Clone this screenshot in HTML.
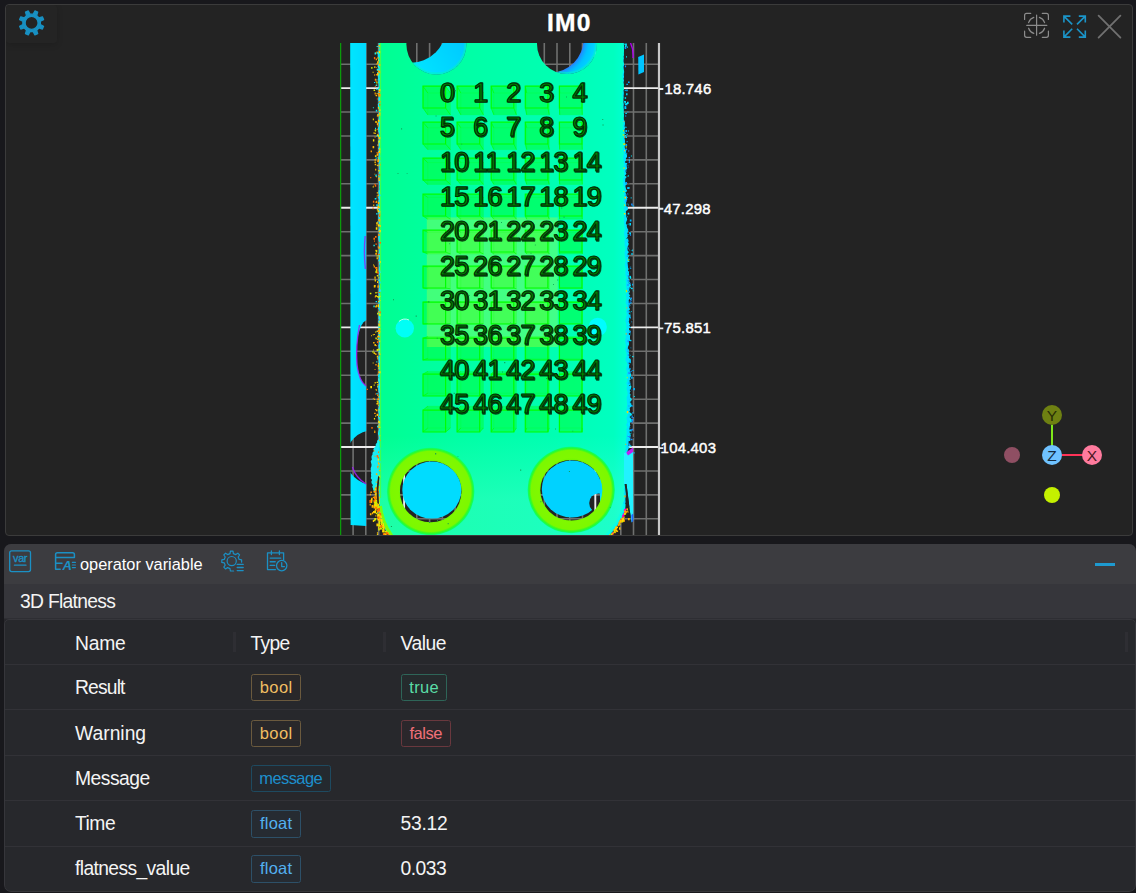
<!DOCTYPE html>
<html lang="en">
<head>
<meta charset="utf-8">
<title>IM0</title>
<style>
*{box-sizing:border-box;margin:0;padding:0}
html,body{width:1136px;height:893px;overflow:hidden;background:#18181c;}
body{position:relative;font-family:"Liberation Sans",sans-serif;color:#f2f2f2;}
.abs{position:absolute}
#top{position:absolute;left:5px;top:4px;width:1128px;height:532px;background:#232323;border:1px solid #3b3b3b;border-radius:4px;overflow:hidden}
#gearbtn{position:absolute;left:0;top:0;width:51px;height:38px;background:#242424;border-radius:3px;box-shadow:0 2px 6px rgba(0,0,0,.14)}
#title{position:absolute;left:469.4px;top:9.4px;width:200px;text-align:center;font-weight:bold;font-size:24.6px;line-height:28px;color:#fff;letter-spacing:1.2px;-webkit-text-stroke:.35px #fff}
#view{position:absolute;left:0;top:0;width:1136px;height:893px;pointer-events:none}
#bot{position:absolute;left:4px;top:544px;width:1132px;height:348px;background:#27272b;border-radius:7px 7px 7px 7px;overflow:hidden}
#tb{position:absolute;left:0;top:0;width:100%;height:40px;background:#3c3c40}
#sec{position:absolute;left:0;top:40px;width:100%;height:35px;background:#36363b;border-bottom:1px solid #2e2e33}
#sec span{position:absolute;left:16px;top:6.2px;font-size:19.3px;line-height:24px;color:#f4f4f4;letter-spacing:-.7px;white-space:nowrap}
#tbl{position:absolute;left:0;top:75px;width:1132px;height:273px;background:#27282c;border:1px solid #36363b;border-radius:5px 5px 7px 7px;overflow:hidden}
.row{position:absolute;left:0;width:100%;height:45.5px;border-bottom:1px solid #323237}
.row span{position:absolute;top:11.4px;font-size:19.3px;line-height:24px;color:#f4f4f4;white-space:nowrap;letter-spacing:-.5px}
.c1{left:70px}.c2{left:245.5px}.c3{left:395.5px}
.tag{position:absolute;top:9.8px;height:27.4px;border:1px solid;border-radius:2.5px;font-size:16.5px;line-height:24.6px;text-align:center;white-space:nowrap}
.tbool{color:#f0be62;border-color:#6b5a3e;background:#29282a;letter-spacing:.45px;text-indent:.45px}
.ttrue{color:#5adca6;border-color:#2e6558;background:#252b2d;letter-spacing:.3px;text-indent:.3px}
.tfalse{color:#f07078;border-color:#6a383e;background:#2b272b;letter-spacing:-.45px;text-indent:-.45px}
.tmsg{color:#1d8fcc;border-color:#1e4a60;background:#24292f;letter-spacing:-.6px;text-indent:-.6px}
.tfloat{color:#53b0f0;border-color:#2d5068;background:#262b32;letter-spacing:.25px;text-indent:.25px}
.grip{position:absolute;top:12px;width:2.6px;height:20px;background:#2e2e33}
.lbl{font-family:"Liberation Sans",sans-serif;font-size:14.9px;fill:#fff;stroke:#fff;stroke-width:.45px;letter-spacing:.25px}
</style>
</head>
<body>
<div id="top">
  <div id="gearbtn"></div>
</div>
<div id="title">IM0</div>
<svg id="view" viewBox="0 0 1136 893" width="1136" height="893">
  <!-- settings gear -->
  <g transform="translate(31.6,22.9)" fill="#1890c2">
    <path fill-rule="evenodd" d="M1.62 -8.75L3.31 -11.95L6.11 -10.79L5.04 -7.33L7.33 -5.04L10.79 -6.11L11.95 -3.31L8.75 -1.62L8.75 1.62L11.95 3.31L10.79 6.11L7.33 5.04L5.04 7.33L6.11 10.79L3.31 11.95L1.62 8.75L-1.62 8.75L-3.31 11.95L-6.11 10.79L-5.04 7.33L-7.33 5.04L-10.79 6.11L-11.95 3.31L-8.75 1.62L-8.75 -1.62L-11.95 -3.31L-10.79 -6.11L-7.33 -5.04L-5.04 -7.33L-6.11 -10.79L-3.31 -11.95L-1.62 -8.75Z M0 -6.5 A6.5 6.5 0 1 0 0 6.5 A6.5 6.5 0 1 0 0 -6.5 Z" stroke="#1890c2" stroke-width="1.3" stroke-linejoin="round"/>
  </g>
  <!-- focus icon -->
  <g fill="none" stroke="#8c8c8c" stroke-width="1.2" stroke-linecap="round">
    <path d="M1024.6 19.5V15.4Q1024.6 13.4 1026.6 13.4H1030.7M1042.3 13.4H1046.4Q1048.4 13.4 1048.4 15.4V19.5M1048.4 31.2V35.3Q1048.4 37.3 1046.4 37.3H1042.3M1030.7 37.3H1026.6Q1024.6 37.3 1024.6 35.3V31.2"/>
    <path d="M1036.6 15V35.2M1026.8 25.4H1046.8"/>
    <path d="M1028.6 22.6A8.4 8.4 0 0 1 1033.8 17.4M1039.4 17.4A8.4 8.4 0 0 1 1044.6 22.6M1044.6 28.2A8.4 8.4 0 0 1 1039.4 33.4M1033.8 33.4A8.4 8.4 0 0 1 1028.6 28.2"/>
  </g>
  <!-- expand icon -->
  <g fill="none" stroke="#1b94c8" stroke-width="1.6" stroke-linecap="butt" stroke-linejoin="miter">
    <path d="M1063.9 22.6V16.1H1070.4M1064.4 16.6L1072.2 24.4"/>
    <path d="M1085.3 22.6V16.1H1078.8M1084.8 16.6L1077 24.4"/>
    <path d="M1063.9 30.6V37.1H1070.4M1064.4 36.6L1072.2 28.8"/>
    <path d="M1085.3 30.6V37.1H1078.8M1084.8 36.6L1077 28.8"/>
  </g>
  <!-- close -->
  <path d="M1098.6 15.6L1120.4 37.6M1120.4 15.6L1098.6 37.6" stroke="#707070" stroke-width="1.8" fill="none" stroke-linecap="round"/>
  <!-- axis gizmo -->
  <g>
    <circle cx="1012" cy="455" r="8" fill="#8f4f63"/>
    <circle cx="1052" cy="495" r="8" fill="#c4f000"/>
    <path d="M1052 425V446" stroke="#7fe81a" stroke-width="2"/>
    <path d="M1062 455H1083" stroke="#ff3358" stroke-width="2"/>
    <circle cx="1052" cy="415" r="10" fill="#6e8012"/>
    <circle cx="1052" cy="455" r="10" fill="#6fc2ff"/>
    <circle cx="1092" cy="455" r="10" fill="#ff7b9e"/>
    <g font-family="Liberation Sans,sans-serif" font-size="15.5" text-anchor="middle">
      <text x="1052" y="420.6" fill="#262c06">Y</text>
      <text x="1052" y="460.6" fill="#152c40">Z</text>
      <text x="1092" y="460.6" fill="#4a1622">X</text>
    </g>
  </g>
<defs>
<clipPath id="cv"><rect x="340" y="43" width="320.6" height="492"/></clipPath>
<linearGradient id="gp" gradientUnits="userSpaceOnUse" x1="380" y1="0" x2="626" y2="0"><stop offset="0" stop-color="#00ff92"/><stop offset=".3" stop-color="#00ffa4"/><stop offset=".7" stop-color="#00ffb2"/><stop offset=".95" stop-color="#00ffc0"/><stop offset="1" stop-color="#00ffd4"/></linearGradient>
<linearGradient id="gs" gradientUnits="userSpaceOnUse" x1="350" y1="0" x2="366" y2="0"><stop offset="0" stop-color="#00e6ff"/><stop offset="1" stop-color="#00daff"/></linearGradient>
<linearGradient id="gn1" gradientUnits="userSpaceOnUse" x1="420" y1="75" x2="468" y2="43"><stop offset="0" stop-color="#00e4ff"/><stop offset="1" stop-color="#00c8ff"/></linearGradient>
<radialGradient id="gn2" gradientUnits="userSpaceOnUse" cx="550.6" cy="39.5" r="48"><stop offset=".685" stop-color="#2a80ff"/><stop offset=".73" stop-color="#10a4ff"/><stop offset=".80" stop-color="#00c4ff"/><stop offset="1" stop-color="#00dcff"/></radialGradient>
<radialGradient id="gr" gradientUnits="objectBoundingBox" cx=".5" cy=".5" r=".5"><stop offset=".68" stop-color="#6cf600"/><stop offset=".74" stop-color="#80f800"/><stop offset=".915" stop-color="#7cf800"/><stop offset=".955" stop-color="#30fc28"/><stop offset=".98" stop-color="#18ff50"/><stop offset="1" stop-color="#08ff88"/></radialGradient>
<mask id="mp" maskUnits="userSpaceOnUse" x="340" y="43" width="321" height="492"><rect x="340" y="43" width="321" height="492" fill="#fff"/><circle cx="436.4" cy="44.6" r="30" fill="#000"/><circle cx="567" cy="44" r="30" fill="#000"/><ellipse cx="430.7" cy="491.6" rx="30.8" ry="30.7" fill="#000"/><ellipse cx="571.3" cy="490.2" rx="31" ry="30.3" fill="#000"/></mask>
<mask id="mn" maskUnits="userSpaceOnUse" x="340" y="43" width="321" height="492"><rect x="340" y="43" width="321" height="492" fill="#fff"/><circle cx="409.4" cy="25.7" r="37.4" fill="#000"/><circle cx="550.6" cy="39.5" r="32.9" fill="#000"/></mask>
<mask id="ms" maskUnits="userSpaceOnUse" x="340" y="43" width="40" height="492"><rect x="340" y="43" width="40" height="492" fill="#fff"/><ellipse cx="367.5" cy="353" rx="11" ry="33" fill="#000"/><circle cx="373.2" cy="457.5" r="27.3" fill="#000"/></mask>
<mask id="md" maskUnits="userSpaceOnUse" x="530" y="450" width="90" height="85"><rect x="530" y="450" width="90" height="85" fill="#fff"/><circle cx="598.6" cy="503" r="9.4" fill="#000"/></mask>
</defs>
<g clip-path="url(#cv)">
<path d="M353.1 43V535M365.8 43V535M378.6 43V535M391.3 43V535M416.8 43V535M429.6 43V535M442.3 43V535M455.1 43V535M480.6 43V535M493.3 43V535M506.1 43V535M518.8 43V535M544.3 43V535M557 43V535M569.8 43V535M582.5 43V535M608 43V535M620.8 43V535M633.5 43V535M646.3 43V535M340 64.2H660M340 112H660M340 136H660M340 159.9H660M340 183.8H660M340 231.7H660M340 255.6H660M340 279.5H660M340 303.5H660M340 351.3H660M340 375.3H660M340 399.2H660M340 423.1H660M340 471H660M340 494.9H660M340 518.8H660" stroke="#6f706f" stroke-width="1.6" fill="none"/>
<path d="M340 88.1H660M340 207.8H660M340 327.4H660M340 447H660M404.1 43V535M467.8 43V535M531.5 43V535M595.3 43V535" stroke="#ececec" stroke-width="1.9" fill="none"/>
<path d="M340.6 43V535" stroke="#0a9a0a" stroke-width="1.3"/>
<path d="M659 43V535" stroke="#c8c8c8" stroke-width="2.2"/>
<g mask="url(#ms)"><path d="M350.2 43H366.2V526L350.6 525Z" fill="url(#gs)"/></g>
<path d="M359.5 325Q355.6 345 357 365Q359 381 366 386" stroke="#a020f0" stroke-width="1.3" fill="none" opacity=".9"/>
<path d="M365.2 236Q363.6 252 365.4 269" stroke="#8a2cf0" stroke-width="1.4" fill="none" opacity=".85"/>
<path d="M352.4 467Q356 478 366 484" stroke="#9a20f0" stroke-width="1.3" fill="none" opacity=".9"/>
<path d="M638.2 57L644 54.6V72L638.4 74.4Z" fill="#00c4ff"/>
<path d="M630.5 43Q633.6 49 633 58" stroke="#b000f0" stroke-width="1.4" fill="none"/>
<path d="M600 43L623.9 43L623.8 44.7L624.1 46.4L623.7 48.1L624 49.8L623.9 51.5L623.7 53.2L624 54.9L623.6 56.6L623.9 58.3L623.6 60L623.6 61.7L623.9 63.4L624.1 65.1L623.6 66.8L623.7 68.5L623.9 70.2L624.2 71.9L623.9 73.6L623.8 75.3L624.1 77L623.5 78.7L624 80.4L623.6 82.1L623.5 83.8L623.5 85.5L623.6 87.2L623.9 88.9L623.5 90.6L623.8 92.3L623.8 94L623.6 95.7L623.7 97.4L623.4 99.1L623.3 100.8L623.5 102.5L623.8 104.2L623.6 105.9L623.6 107.6L623.8 109.3L623.7 111L623.6 112.7L624 114.4L623.9 116.1L623.6 117.8L623.8 119.5L624.7 121.2L625 122.9L624.9 124.6L624.6 126.3L625.1 128L624.5 129.7L624.7 131.4L625 133.1L624.5 134.8L624.8 136.5L624.5 138.2L624.9 139.9L625 141.6L624.9 143.3L625.1 145L624.7 146.7L625 148.4L626.1 150.1L626.1 151.8L625.7 153.5L626.8 155.2L627 156.9L625.8 158.6L626.3 160.3L624.8 162L626.5 163.7L626.4 165.4L627.3 167.1L626.9 168.8L625.5 170.5L625.8 172.2L626.5 173.9L624.9 175.6L626.1 177.3L625.3 179L625.2 180.7L625.1 182.4L627 184.1L625.3 185.8L625.7 187.5L626.1 189.2L627.3 190.9L625.3 192.6L626.3 194.3L626.6 196L627.5 197.7L627.3 199.4L627.5 201.1L626 202.8L626.4 204.5L626.3 206.2L627.7 207.9L627.9 209.6L625.9 211.3L626 213L626.2 214.7L626.2 216.4L626.9 218.1L627.2 219.8L626.4 221.5L625.8 223.2L626.9 224.9L626.8 226.6L627.4 228.3L628.4 230L627.8 231.7L627.3 233.4L627.6 235.1L627.8 236.8L626.3 238.5L628.5 240.2L628.2 241.9L628.5 243.6L628.4 245.3L627.3 247L627.4 248.7L627.6 250.4L629 252.1L627.6 253.8L627.6 255.5L628 257.2L627.9 258.9L628.4 260.6L627.7 262.3L627.6 264L628.1 265.7L628 267.4L628.7 269.1L627.9 270.8L630.1 272.5L629.5 274.2L628.3 275.9L628.6 277.6L628.9 279.3L629 281L628.4 282.7L630.3 284.4L630.7 286.1L629.4 287.8L629.5 289.5L628.5 291.2L628.6 292.9L629.3 294.6L629.1 296.3L630.6 298L628.9 299.7L628.5 301.4L630.9 303.1L629.8 304.8L628.8 306.5L629.8 308.2L628.5 309.9L629.8 311.6L630.9 313.3L630.6 315L630.2 316.7L629 318.4L629.3 320.1L628.7 321.8L630.3 323.5L629.6 325.2L630.2 326.9L629 328.6L628.7 330.3L630.1 332L630.6 333.7L630.2 335.4L630 337.1L630 338.8L629.7 340.5L628.4 342.2L629.1 343.9L628.6 345.6L627.9 347.3L627.9 349L628.7 350.7L628.7 352.4L629.9 354.1L630.6 355.8L629.4 357.5L630.7 359.2L630.9 360.9L630.9 362.6L629.4 364.3L629.1 366L629.2 367.7L629.2 369.4L629.3 371.1L630.4 372.8L631.1 374.5L631 376.2L630.1 377.9L630.6 379.6L631 381.3L629.2 383L630.7 384.7L631.4 386.4L631.1 388.1L631 389.8L630.4 391.5L629.6 393.2L631.2 394.9L630.1 396.6L631.3 398.3L631.8 400L630.3 401.7L630.3 403.4L631.7 405.1L631.1 406.8L629.6 408.5L629.5 410.2L629.5 411.9L631.5 413.6L631.2 415.3L629.5 417L631.2 418.7L631.6 420.4L630.7 422.1L629.9 423.8L630.4 425.5L629.3 427.2L629 428.9L631.4 430.6L630.4 432.3L630 434L630.9 435.7L629.5 437.4L630.5 439.1L630.3 440.8L628.6 442.5L628.6 444.2L628.5 445.9L628.3 447.6L629.1 449.3L627.2 451L627.6 452.7L626.7 454.4L628.7 456.1L627.1 457.8L627.3 459.5L627.6 461.2L628.3 462.9L627.1 464.6L628.3 466.3L627.2 468L627.3 469.7L626.3 471.4L625.9 473.1L626.2 474.8L626 476.5L625.9 478.2L626.4 479.9L625.9 481.6L626.1 483.3L626.3 485L626.1 486.7L625.9 488.4L625.9 490.1L625.9 491.8L626 493.5L625.5 495.2L625.7 496.9L625.4 498.6L625.4 500.3L625.6 502L625.2 503.7L625.1 505.4L625.1 507.1L625 508.8L624.6 510.5L624.1 512.2L623.3 513.9L622.6 515.6L622 517.3L620.9 519L620 520.7L619 522.4L618.3 524.1L616.8 525.8L615.7 527.5L614.5 529.2L612.6 530.9L611.4 532.6L610.3 534.3L608.8 536L600 536Z" fill="#00e2ff"/>
<path d="M400 43L378.7 43L378.7 44.7L378.3 46.4L378.8 48.1L378.6 49.8L378.8 51.5L378 53.2L377.8 54.9L377.7 56.6L378.7 58.3L378 60L378 61.7L378.8 63.4L377.8 65.1L377.6 66.8L378.7 68.5L377.7 70.2L378.5 71.9L378.3 73.6L377.6 75.3L377.9 77L378.8 78.7L378.4 80.4L378.3 82.1L378.6 83.8L378.8 85.5L378.6 87.2L378.1 88.9L379.1 90.6L378.3 92.3L378.5 94L379.1 95.7L378.6 97.4L378.2 99.1L378.4 100.8L379 102.5L377.8 104.2L378 105.9L377.8 107.6L379 109.3L378.8 111L379.1 112.7L378.1 114.4L378.8 116.1L379 117.8L378.6 119.5L377.9 121.2L378.1 122.9L378.8 124.6L379 126.3L377.9 128L378.4 129.7L378.2 131.4L379.1 133.1L379.2 134.8L378.3 136.5L378.7 138.2L379.1 139.9L377.9 141.6L378.4 143.3L378.1 145L379.1 146.7L378.1 148.4L379.2 150.1L378.1 151.8L378.6 153.5L378.8 155.2L378.5 156.9L378 158.6L378.9 160.3L379.1 162L378.6 163.7L379 165.4L379.2 167.1L379.1 168.8L379.3 170.5L379 172.2L378.9 173.9L378.9 175.6L378.3 177.3L378.9 179L378.7 180.7L379.1 182.4L378.9 184.1L379.3 185.8L379 187.5L379.4 189.2L378.4 190.9L378.6 192.6L379.1 194.3L378.7 196L378.1 197.7L379.2 199.4L378.3 201.1L378.8 202.8L378.7 204.5L378.2 206.2L378.9 207.9L378.7 209.6L378.5 211.3L378.1 213L378.9 214.7L378.3 216.4L378.4 218.1L378.5 219.8L378.9 221.5L379 223.2L379.4 224.9L379.3 226.6L379.4 228.3L378.4 230L379.1 231.7L379.2 233.4L379.4 235.1L378.3 236.8L378.3 238.5L378.5 240.2L379.1 241.9L379.1 243.6L379.1 245.3L378.9 247L379.3 248.7L378.9 250.4L379.1 252.1L378.2 253.8L378.1 255.5L378.7 257.2L379.2 258.9L378.2 260.6L379.1 262.3L379 264L379.5 265.7L379 267.4L378.9 269.1L378.8 270.8L379.3 272.5L378.8 274.2L379.5 275.9L379.2 277.6L379.4 279.3L379 281L379.5 282.7L379.5 284.4L379.1 286.1L379.2 287.8L378.8 289.5L378.8 291.2L378.5 292.9L378.7 294.6L378.6 296.3L378.4 298L379.1 299.7L379.1 301.4L378.2 303.1L379.4 304.8L378.6 306.5L378.7 308.2L379.5 309.9L378.4 311.6L378.3 313.3L378.7 315L378.5 316.7L378.4 318.4L379.3 320.1L378.8 321.8L378.8 323.5L378.4 325.2L378.4 326.9L378.4 328.6L378.7 330.3L378.3 332L378.5 333.7L378.5 335.4L379.2 337.1L379.4 338.8L379.3 340.5L379 342.2L379.3 343.9L378.3 345.6L378.7 347.3L378.6 349L378.6 350.7L378.5 352.4L378.8 354.1L379.4 355.8L378.3 357.5L378.4 359.2L378.7 360.9L378.7 362.6L378.5 364.3L379.3 366L378.4 367.7L379 369.4L379.3 371.1L379 372.8L378.4 374.5L379.1 376.2L378.3 377.9L378 379.6L378.7 381.3L378.8 383L378.7 384.7L378.4 386.4L378.3 388.1L378.5 389.8L378.4 391.5L379.2 393.2L379.1 394.9L379 396.6L378.3 398.3L378.9 400L378.5 401.7L379.3 403.4L379.2 405.1L378.9 406.8L378.3 408.5L378.3 410.2L378.3 411.9L378.9 413.6L378.5 415.3L378.6 417L378.6 418.7L379.1 420.4L378 422.1L379 423.8L377.9 425.5L377.9 427.2L379.2 428.9L378.6 430.6L378.1 432.3L377.9 434L378.6 435.7L378.8 437.4L378.9 439.1L377.1 440.8L377.1 442.5L375.7 444.2L375.7 445.9L374.5 447.6L373.3 449.3L374 451L372.5 452.7L372.5 454.4L371.6 456.1L371.5 457.8L371.9 459.5L370.7 461.2L371.1 462.9L371.5 464.6L371.4 466.3L370.7 468L370.7 469.7L370.9 471.4L371.2 473.1L371 474.8L371.2 476.5L370.7 478.2L372.1 479.9L371.4 481.6L371.6 483.3L372.9 485L372.2 486.7L373 488.4L373.2 490.1L374.6 491.8L375.1 493.5L375.8 495.2L375.7 496.9L377.2 498.6L378.7 500.3L378.8 502L379.1 503.7L379.6 505.4L379.6 507.1L378.8 508.8L379.7 510.5L378.9 512.2L380.3 513.9L380.7 515.6L380.8 517.3L381.7 519L382 520.7L381.9 522.4L382.7 524.1L383.5 525.8L384.5 527.5L385.1 529.2L386.1 530.9L387.7 532.6L388.5 534.3L390.5 536L400 536Z" fill="#18ecf4"/>
<g mask="url(#mp)">
<path d="M379.5 43L379.3 45.3L379.5 47.6L379.5 49.9L379.1 52.2L378.9 54.5L379.7 56.8L379 59.1L379.3 61.4L379.2 63.7L379.2 66L379.6 68.3L379.8 70.6L379.2 72.9L379.6 75.2L379.3 77.5L379.5 79.8L379.4 82.1L379.2 84.4L379.2 86.7L379.2 89L379.9 91.3L379.5 93.6L379.3 95.9L379.9 98.2L380 100.5L379.5 102.8L379.2 105.1L379.3 107.4L379.2 109.7L379.4 112L379.2 114.3L379.4 116.6L379.4 118.9L379.7 121.2L380 123.5L379.8 125.8L379.5 128.1L379.5 130.4L379.7 132.7L379.5 135L379.5 137.3L379.3 139.6L379.5 141.9L380.1 144.2L379.3 146.5L379.7 148.8L379.8 151.1L380 153.4L379.4 155.7L379.5 158L379.5 160.3L379.6 162.6L379.7 164.9L380.1 167.2L380 169.5L380.1 171.8L379.3 174.1L379.3 176.4L379.9 178.7L380.1 181L379.7 183.3L379.8 185.6L379.3 187.9L379.7 190.2L380.2 192.5L380.1 194.8L380.1 197.1L380.2 199.4L379.6 201.7L379.5 204L379.5 206.3L379.8 208.6L380 210.9L380.2 213.2L380 215.5L380 217.8L380.1 220.1L379.8 222.4L379.9 224.7L379.4 227L380.1 229.3L379.6 231.6L380.2 233.9L380 236.2L379.7 238.5L379.5 240.8L379.7 243.1L380 245.4L380.1 247.7L379.6 250L379.5 252.3L379.9 254.6L380 256.9L379.8 259.2L379.7 261.5L380 263.8L379.5 266.1L379.8 268.4L379.9 270.7L380.4 273L380.1 275.3L380.3 277.6L379.9 279.9L379.7 282.2L379.7 284.5L380.4 286.8L380.2 289.1L379.8 291.4L379.6 293.7L380 296L380.2 298.3L379.9 300.6L379.8 302.9L380.1 305.2L380.4 307.5L379.7 309.8L379.5 312.1L379.8 314.4L379.9 316.7L380.1 319L379.7 321.3L380.2 323.6L380.1 325.9L379.9 328.2L379.6 330.5L380.3 332.8L379.7 335.1L380.2 337.4L379.6 339.7L379.6 342L380.1 344.3L379.7 346.6L380.3 348.9L379.8 351.2L379.6 353.5L379.6 355.8L379.8 358.1L380 360.4L380.2 362.7L379.5 365L379.7 367.3L379.5 369.6L380.2 371.9L379.5 374.2L379.4 376.5L379.4 378.8L379.7 381.1L380.1 383.4L380.1 385.7L380 388L380.2 390.3L380.1 392.6L379.6 394.9L379.4 397.2L380.1 399.5L379.9 401.8L379.3 404.1L379.8 406.4L379.6 408.7L379.6 411L379.5 413.3L379.4 415.6L379.2 417.9L379.5 420.2L379.5 422.5L380.1 424.8L379.3 427.1L380 429.4L379.4 431.7L379.5 434L379.9 436.3L379.9 438.6L379.5 440.9L379.2 443.2L379.5 445.5L379.4 447.8L379.8 450.1L379.2 452.4L379.3 454.7L379.7 457L378.9 459.3L379.2 461.6L379.6 463.9L379.5 466.2L378.8 468.5L378.8 470.8L378.8 473.1L379.7 475.4L379.1 477.7L379.6 480L379.7 482.3L379.2 484.6L379.2 486.9L379.9 489.2L379.6 491.5L379.3 493.8L379.7 496.1L379.4 498.4L379.5 500.7L379.4 503L380.3 505.3L380.6 507.6L380.5 509.9L381 512.2L380.8 514.5L381.6 516.8L382.4 519.1L383.6 521.4L384.6 523.7L385 526L386 528.3L387.6 530.6L389.1 532.9L390.9 535.2L607.1 535.2L610.2 532.9L612.2 530.6L613.3 528.3L615.8 526L616.2 523.7L618.5 521.4L619.7 519.1L621.3 516.8L622.1 514.5L621.9 512.2L623.8 509.9L623.1 507.6L623.5 505.3L623 503L624 500.7L624.5 498.4L624.5 496.1L623.6 493.8L624.5 491.5L623.7 489.2L624.5 486.9L624.5 484.6L624 482.3L624.5 480L624.1 477.7L624 475.4L624.7 473.1L624.2 470.8L624.7 468.5L625.2 466.2L625.2 463.9L624.4 461.6L624.9 459.3L625.2 457L624.4 454.7L625.2 452.4L625.3 450.1L625.8 447.8L625.6 445.5L626 443.2L625.9 440.9L625.9 438.6L626.6 436.3L626.6 434L626.8 431.7L626.2 429.4L627.4 427.1L626.1 424.8L627.3 422.5L627 420.2L626.2 417.9L627.6 415.6L627.4 413.3L626.6 411L626.5 408.7L626.9 406.4L627.2 404.1L627 401.8L626.7 399.5L626.6 397.2L627.6 394.9L627.6 392.6L626.9 390.3L626.5 388L627.4 385.7L626.3 383.4L627.3 381.1L627 378.8L627.4 376.5L626.5 374.2L627.3 371.9L625.9 369.6L626.5 367.3L627.2 365L627 362.7L625.6 360.4L625.6 358.1L626.8 355.8L626.4 353.5L625.8 351.2L625.1 348.9L626.3 346.6L625.7 344.3L625.3 342L625.2 339.7L625.8 337.4L625.7 335.1L626.1 332.8L625.3 330.5L626.7 328.2L626.3 325.9L626.2 323.6L625.4 321.3L625.7 319L626.2 316.7L626.9 314.4L626.1 312.1L626.8 309.8L626.2 307.5L627 305.2L625.6 302.9L625.9 300.6L626.7 298.3L625.8 296L626 293.7L627 291.4L626.7 289.1L625.9 286.8L625.8 284.5L626.1 282.2L625.6 279.9L626.6 277.6L625.5 275.3L625.4 273L625.6 270.7L626 268.4L625 266.1L624.9 263.8L625.7 261.5L625.5 259.2L625.2 256.9L624.7 254.6L624.6 252.3L625.3 250L625.6 247.7L624.6 245.4L624.7 243.1L624.5 240.8L625.2 238.5L624.6 236.2L624 233.9L624.3 231.6L624.9 229.3L624.8 227L624.2 224.7L624.1 222.4L623.9 220.1L624.2 217.8L623.9 215.5L624.5 213.2L624.4 210.9L623.6 208.6L624.9 206.3L624.5 204L623.7 201.7L623.9 199.4L624.5 197.1L623.7 194.8L624.6 192.5L624 190.2L624.6 187.9L623.3 185.6L623.1 183.3L623.4 181L622.9 178.7L624.3 176.4L624.2 174.1L624.1 171.8L623.5 169.5L622.9 167.2L624.3 164.9L623.7 162.6L623.9 160.3L623 158L623.4 155.7L624.1 153.4L623.2 151.1L623 148.8L623.4 146.5L623.9 144.2L622.7 141.9L622.9 139.6L622.8 137.3L622.8 135L623.6 132.7L623 130.4L623.3 128.1L622.8 125.8L623.7 123.5L622.5 121.2L623.4 118.9L623.7 116.6L623.5 114.3L623.4 112L623.3 109.7L622.9 107.4L622.6 105.1L622.9 102.8L623.3 100.5L623 98.2L622.4 95.9L622.4 93.6L622.7 91.3L623.9 89L623.7 86.7L623.9 84.4L622.8 82.1L623.2 79.8L622.4 77.5L622.5 75.2L622.8 72.9L623.6 70.6L622.7 68.3L622.6 66L623.7 63.7L623 61.4L623 59.1L623 56.8L623.5 54.5L623.8 52.2L623.9 49.9L623.7 47.6L623.9 45.3L622.9 43Z" fill="url(#gp)"/>
<clipPath id="cpl"><path d="M379.5 43L379.3 45.3L379.5 47.6L379.5 49.9L379.1 52.2L378.9 54.5L379.7 56.8L379 59.1L379.3 61.4L379.2 63.7L379.2 66L379.6 68.3L379.8 70.6L379.2 72.9L379.6 75.2L379.3 77.5L379.5 79.8L379.4 82.1L379.2 84.4L379.2 86.7L379.2 89L379.9 91.3L379.5 93.6L379.3 95.9L379.9 98.2L380 100.5L379.5 102.8L379.2 105.1L379.3 107.4L379.2 109.7L379.4 112L379.2 114.3L379.4 116.6L379.4 118.9L379.7 121.2L380 123.5L379.8 125.8L379.5 128.1L379.5 130.4L379.7 132.7L379.5 135L379.5 137.3L379.3 139.6L379.5 141.9L380.1 144.2L379.3 146.5L379.7 148.8L379.8 151.1L380 153.4L379.4 155.7L379.5 158L379.5 160.3L379.6 162.6L379.7 164.9L380.1 167.2L380 169.5L380.1 171.8L379.3 174.1L379.3 176.4L379.9 178.7L380.1 181L379.7 183.3L379.8 185.6L379.3 187.9L379.7 190.2L380.2 192.5L380.1 194.8L380.1 197.1L380.2 199.4L379.6 201.7L379.5 204L379.5 206.3L379.8 208.6L380 210.9L380.2 213.2L380 215.5L380 217.8L380.1 220.1L379.8 222.4L379.9 224.7L379.4 227L380.1 229.3L379.6 231.6L380.2 233.9L380 236.2L379.7 238.5L379.5 240.8L379.7 243.1L380 245.4L380.1 247.7L379.6 250L379.5 252.3L379.9 254.6L380 256.9L379.8 259.2L379.7 261.5L380 263.8L379.5 266.1L379.8 268.4L379.9 270.7L380.4 273L380.1 275.3L380.3 277.6L379.9 279.9L379.7 282.2L379.7 284.5L380.4 286.8L380.2 289.1L379.8 291.4L379.6 293.7L380 296L380.2 298.3L379.9 300.6L379.8 302.9L380.1 305.2L380.4 307.5L379.7 309.8L379.5 312.1L379.8 314.4L379.9 316.7L380.1 319L379.7 321.3L380.2 323.6L380.1 325.9L379.9 328.2L379.6 330.5L380.3 332.8L379.7 335.1L380.2 337.4L379.6 339.7L379.6 342L380.1 344.3L379.7 346.6L380.3 348.9L379.8 351.2L379.6 353.5L379.6 355.8L379.8 358.1L380 360.4L380.2 362.7L379.5 365L379.7 367.3L379.5 369.6L380.2 371.9L379.5 374.2L379.4 376.5L379.4 378.8L379.7 381.1L380.1 383.4L380.1 385.7L380 388L380.2 390.3L380.1 392.6L379.6 394.9L379.4 397.2L380.1 399.5L379.9 401.8L379.3 404.1L379.8 406.4L379.6 408.7L379.6 411L379.5 413.3L379.4 415.6L379.2 417.9L379.5 420.2L379.5 422.5L380.1 424.8L379.3 427.1L380 429.4L379.4 431.7L379.5 434L379.9 436.3L379.9 438.6L379.5 440.9L379.2 443.2L379.5 445.5L379.4 447.8L379.8 450.1L379.2 452.4L379.3 454.7L379.7 457L378.9 459.3L379.2 461.6L379.6 463.9L379.5 466.2L378.8 468.5L378.8 470.8L378.8 473.1L379.7 475.4L379.1 477.7L379.6 480L379.7 482.3L379.2 484.6L379.2 486.9L379.9 489.2L379.6 491.5L379.3 493.8L379.7 496.1L379.4 498.4L379.5 500.7L379.4 503L380.3 505.3L380.6 507.6L380.5 509.9L381 512.2L380.8 514.5L381.6 516.8L382.4 519.1L383.6 521.4L384.6 523.7L385 526L386 528.3L387.6 530.6L389.1 532.9L390.9 535.2L607.1 535.2L610.2 532.9L612.2 530.6L613.3 528.3L615.8 526L616.2 523.7L618.5 521.4L619.7 519.1L621.3 516.8L622.1 514.5L621.9 512.2L623.8 509.9L623.1 507.6L623.5 505.3L623 503L624 500.7L624.5 498.4L624.5 496.1L623.6 493.8L624.5 491.5L623.7 489.2L624.5 486.9L624.5 484.6L624 482.3L624.5 480L624.1 477.7L624 475.4L624.7 473.1L624.2 470.8L624.7 468.5L625.2 466.2L625.2 463.9L624.4 461.6L624.9 459.3L625.2 457L624.4 454.7L625.2 452.4L625.3 450.1L625.8 447.8L625.6 445.5L626 443.2L625.9 440.9L625.9 438.6L626.6 436.3L626.6 434L626.8 431.7L626.2 429.4L627.4 427.1L626.1 424.8L627.3 422.5L627 420.2L626.2 417.9L627.6 415.6L627.4 413.3L626.6 411L626.5 408.7L626.9 406.4L627.2 404.1L627 401.8L626.7 399.5L626.6 397.2L627.6 394.9L627.6 392.6L626.9 390.3L626.5 388L627.4 385.7L626.3 383.4L627.3 381.1L627 378.8L627.4 376.5L626.5 374.2L627.3 371.9L625.9 369.6L626.5 367.3L627.2 365L627 362.7L625.6 360.4L625.6 358.1L626.8 355.8L626.4 353.5L625.8 351.2L625.1 348.9L626.3 346.6L625.7 344.3L625.3 342L625.2 339.7L625.8 337.4L625.7 335.1L626.1 332.8L625.3 330.5L626.7 328.2L626.3 325.9L626.2 323.6L625.4 321.3L625.7 319L626.2 316.7L626.9 314.4L626.1 312.1L626.8 309.8L626.2 307.5L627 305.2L625.6 302.9L625.9 300.6L626.7 298.3L625.8 296L626 293.7L627 291.4L626.7 289.1L625.9 286.8L625.8 284.5L626.1 282.2L625.6 279.9L626.6 277.6L625.5 275.3L625.4 273L625.6 270.7L626 268.4L625 266.1L624.9 263.8L625.7 261.5L625.5 259.2L625.2 256.9L624.7 254.6L624.6 252.3L625.3 250L625.6 247.7L624.6 245.4L624.7 243.1L624.5 240.8L625.2 238.5L624.6 236.2L624 233.9L624.3 231.6L624.9 229.3L624.8 227L624.2 224.7L624.1 222.4L623.9 220.1L624.2 217.8L623.9 215.5L624.5 213.2L624.4 210.9L623.6 208.6L624.9 206.3L624.5 204L623.7 201.7L623.9 199.4L624.5 197.1L623.7 194.8L624.6 192.5L624 190.2L624.6 187.9L623.3 185.6L623.1 183.3L623.4 181L622.9 178.7L624.3 176.4L624.2 174.1L624.1 171.8L623.5 169.5L622.9 167.2L624.3 164.9L623.7 162.6L623.9 160.3L623 158L623.4 155.7L624.1 153.4L623.2 151.1L623 148.8L623.4 146.5L623.9 144.2L622.7 141.9L622.9 139.6L622.8 137.3L622.8 135L623.6 132.7L623 130.4L623.3 128.1L622.8 125.8L623.7 123.5L622.5 121.2L623.4 118.9L623.7 116.6L623.5 114.3L623.4 112L623.3 109.7L622.9 107.4L622.6 105.1L622.9 102.8L623.3 100.5L623 98.2L622.4 95.9L622.4 93.6L622.7 91.3L623.9 89L623.7 86.7L623.9 84.4L622.8 82.1L623.2 79.8L622.4 77.5L622.5 75.2L622.8 72.9L623.6 70.6L622.7 68.3L622.6 66L623.7 63.7L623 61.4L623 59.1L623 56.8L623.5 54.5L623.8 52.2L623.9 49.9L623.7 47.6L623.9 45.3L622.9 43Z"/></clipPath>
<linearGradient id="gb" gradientUnits="userSpaceOnUse" x1="0" y1="436" x2="0" y2="500"><stop offset="0" stop-color="#90fff0" stop-opacity="0"/><stop offset="1" stop-color="#90fff0" stop-opacity=".2"/></linearGradient>
<rect x="376" y="436" width="256" height="100" fill="url(#gb)" clip-path="url(#cpl)"/>
<path d="M380.2 506L381.4 513Q383.4 522 387.4 529L392.4 537" stroke="#80ff00" stroke-width="3.4" fill="none" opacity=".9"/>
<path d="M624 504L623 511L620 518L616.5 524L612 530L607 536" stroke="#00fff0" stroke-width="4" fill="none" opacity=".6"/>
<path d="M380.6 43V498" stroke="#58ff30" stroke-width="1" opacity=".8"/>
<circle cx="430.7" cy="491.4" r="43.8" fill="url(#gr)"/>
<ellipse cx="571.2" cy="489.9" rx="43.7" ry="43.3" fill="url(#gr)"/>
</g>
<g mask="url(#mn)"><circle cx="436.4" cy="44.6" r="30" fill="url(#gn1)"/><circle cx="567" cy="44" r="30" fill="url(#gn2)"/><circle cx="436.4" cy="44.6" r="29.2" fill="none" stroke="#00ffb0" stroke-opacity=".45" stroke-width="2.4"/><circle cx="567" cy="44" r="29.2" fill="none" stroke="#00ffb8" stroke-opacity=".45" stroke-width="2.4"/></g>
<ellipse cx="431.8" cy="490.1" rx="29.5" ry="28.5" fill="#00dcff"/>
<g mask="url(#md)"><ellipse cx="571.8" cy="489" rx="30" ry="28.5" fill="#00d2ff"/></g>
<circle cx="404.8" cy="328.3" r="9.2" fill="#00fff6"/><circle cx="597.7" cy="327" r="9.2" fill="#00fdff"/>
<path d="M399 321.4A9.4 9.4 0 0 1 409 320" stroke="#e8fff0" stroke-width="1" fill="none" opacity=".8"/>
<path d="M423 86.2L445.6 86.2L450.4 93L450.4 114.8L427.8 114.8L423 108ZM457.1 86.2L479.7 86.2L483.4 93L483.4 114.8L460.8 114.8L457.1 108ZM491.2 86.2L513.8 86.2L516.4 93L516.4 114.8L493.8 114.8L491.2 108ZM525.3 86.2L547.9 86.2L549.3 93L549.3 114.8L526.7 114.8L525.3 108ZM559.4 86.2L582 86.2L582.3 93L582.3 114.8L559.7 114.8L559.4 108ZM423 122.2L445.6 122.2L450.4 127.8L450.4 149.6L427.8 149.6L423 144ZM457.1 122.2L479.7 122.2L483.4 127.8L483.4 149.6L460.8 149.6L457.1 144ZM491.2 122.2L513.8 122.2L516.4 127.8L516.4 149.6L493.8 149.6L491.2 144ZM525.3 122.2L547.9 122.2L549.3 127.8L549.3 149.6L526.7 149.6L525.3 144ZM559.4 122.2L582 122.2L582.3 127.8L582.3 149.6L559.7 149.6L559.4 144ZM423 158.2L445.6 158.2L450.4 162.6L450.4 184.4L427.8 184.4L423 180ZM457.1 158.2L479.7 158.2L483.4 162.6L483.4 184.4L460.8 184.4L457.1 180ZM491.2 158.2L513.8 158.2L516.4 162.6L516.4 184.4L493.8 184.4L491.2 180ZM525.3 158.2L547.9 158.2L549.3 162.6L549.3 184.4L526.7 184.4L525.3 180ZM559.4 158.2L582 158.2L582.3 162.6L582.3 184.4L559.7 184.4L559.4 180ZM423 194.2L445.6 194.2L450.4 197.4L450.4 219.2L427.8 219.2L423 216ZM457.1 194.2L479.7 194.2L483.4 197.4L483.4 219.2L460.8 219.2L457.1 216ZM491.2 194.2L513.8 194.2L516.4 197.4L516.4 219.2L493.8 219.2L491.2 216ZM525.3 194.2L547.9 194.2L549.3 197.4L549.3 219.2L526.7 219.2L525.3 216ZM559.4 194.2L582 194.2L582.3 197.4L582.3 219.2L559.7 219.2L559.4 216ZM423 230.2L445.6 230.2L450.4 232.2L450.4 254L427.8 254L423 252ZM457.1 230.2L479.7 230.2L483.4 232.2L483.4 254L460.8 254L457.1 252ZM491.2 230.2L513.8 230.2L516.4 232.2L516.4 254L493.8 254L491.2 252ZM525.3 230.2L547.9 230.2L549.3 232.2L549.3 254L526.7 254L525.3 252ZM559.4 230.2L582 230.2L582.3 232.2L582.3 254L559.7 254L559.4 252ZM423 266.2L445.6 266.2L450.4 267L450.4 288.8L427.8 288.8L423 288ZM457.1 266.2L479.7 266.2L483.4 267L483.4 288.8L460.8 288.8L457.1 288ZM491.2 266.2L513.8 266.2L516.4 267L516.4 288.8L493.8 288.8L491.2 288ZM525.3 266.2L547.9 266.2L549.3 267L549.3 288.8L526.7 288.8L525.3 288ZM559.4 266.2L582 266.2L582.3 267L582.3 288.8L559.7 288.8L559.4 288ZM423 302.2L427.8 301.8L450.4 301.8L450.4 323.6L445.6 324L423 324ZM457.1 302.2L460.8 301.8L483.4 301.8L483.4 323.6L479.7 324L457.1 324ZM491.2 302.2L493.8 301.8L516.4 301.8L516.4 323.6L513.8 324L491.2 324ZM525.3 302.2L526.7 301.8L549.3 301.8L549.3 323.6L547.9 324L525.3 324ZM559.4 302.2L559.7 301.8L582.3 301.8L582.3 323.6L582 324L559.4 324ZM423 338.2L427.8 336.6L450.4 336.6L450.4 358.4L445.6 360L423 360ZM457.1 338.2L460.8 336.6L483.4 336.6L483.4 358.4L479.7 360L457.1 360ZM491.2 338.2L493.8 336.6L516.4 336.6L516.4 358.4L513.8 360L491.2 360ZM525.3 338.2L526.7 336.6L549.3 336.6L549.3 358.4L547.9 360L525.3 360ZM559.4 338.2L559.7 336.6L582.3 336.6L582.3 358.4L582 360L559.4 360ZM423 374.2L427.8 371.4L450.4 371.4L450.4 393.2L445.6 396L423 396ZM457.1 374.2L460.8 371.4L483.4 371.4L483.4 393.2L479.7 396L457.1 396ZM491.2 374.2L493.8 371.4L516.4 371.4L516.4 393.2L513.8 396L491.2 396ZM525.3 374.2L526.7 371.4L549.3 371.4L549.3 393.2L547.9 396L525.3 396ZM559.4 374.2L559.7 371.4L582.3 371.4L582.3 393.2L582 396L559.4 396ZM423 410.2L427.8 406.2L450.4 406.2L450.4 428L445.6 432L423 432ZM457.1 410.2L460.8 406.2L483.4 406.2L483.4 428L479.7 432L457.1 432ZM491.2 410.2L493.8 406.2L516.4 406.2L516.4 428L513.8 432L491.2 432ZM525.3 410.2L526.7 406.2L549.3 406.2L549.3 428L547.9 432L525.3 432ZM559.4 410.2L559.7 406.2L582.3 406.2L582.3 428L582 432L559.4 432Z" fill="#00ff30" fill-opacity=".5"/>
<rect x="426.8" y="217.4" width="131" height="129.6" fill="#dcff28" fill-opacity=".3"/>
<path d="M427.8 93H450.4V114.8H427.8ZM460.8 93H483.4V114.8H460.8ZM493.8 93H516.4V114.8H493.8ZM526.7 93H549.3V114.8H526.7ZM559.7 93H582.3V114.8H559.7ZM427.8 127.8H450.4V149.6H427.8ZM460.8 127.8H483.4V149.6H460.8ZM493.8 127.8H516.4V149.6H493.8ZM526.7 127.8H549.3V149.6H526.7ZM559.7 127.8H582.3V149.6H559.7ZM427.8 162.6H450.4V184.4H427.8ZM460.8 162.6H483.4V184.4H460.8ZM493.8 162.6H516.4V184.4H493.8ZM526.7 162.6H549.3V184.4H526.7ZM559.7 162.6H582.3V184.4H559.7ZM427.8 197.4H450.4V219.2H427.8ZM460.8 197.4H483.4V219.2H460.8ZM493.8 197.4H516.4V219.2H493.8ZM526.7 197.4H549.3V219.2H526.7ZM559.7 197.4H582.3V219.2H559.7ZM427.8 232.2H450.4V254H427.8ZM460.8 232.2H483.4V254H460.8ZM493.8 232.2H516.4V254H493.8ZM526.7 232.2H549.3V254H526.7ZM559.7 232.2H582.3V254H559.7ZM427.8 267H450.4V288.8H427.8ZM460.8 267H483.4V288.8H460.8ZM493.8 267H516.4V288.8H493.8ZM526.7 267H549.3V288.8H526.7ZM559.7 267H582.3V288.8H559.7ZM427.8 301.8H450.4V323.6H427.8ZM460.8 301.8H483.4V323.6H460.8ZM493.8 301.8H516.4V323.6H493.8ZM526.7 301.8H549.3V323.6H526.7ZM559.7 301.8H582.3V323.6H559.7ZM427.8 336.6H450.4V358.4H427.8ZM460.8 336.6H483.4V358.4H460.8ZM493.8 336.6H516.4V358.4H493.8ZM526.7 336.6H549.3V358.4H526.7ZM559.7 336.6H582.3V358.4H559.7ZM427.8 371.4H450.4V393.2H427.8ZM460.8 371.4H483.4V393.2H460.8ZM493.8 371.4H516.4V393.2H493.8ZM526.7 371.4H549.3V393.2H526.7ZM559.7 371.4H582.3V393.2H559.7ZM427.8 406.2H450.4V428H427.8ZM460.8 406.2H483.4V428H460.8ZM493.8 406.2H516.4V428H493.8ZM526.7 406.2H549.3V428H526.7ZM559.7 406.2H582.3V428H559.7Z" stroke="#00ff00" stroke-width=".8" fill="none" stroke-opacity=".22"/>
<path d="M423 86.2l4.8 6.8M445.6 86.2l4.8 6.8M423 108l4.8 6.8M445.6 108l4.8 6.8M457.1 86.2l3.7 6.8M479.7 86.2l3.7 6.8M457.1 108l3.7 6.8M479.7 108l3.7 6.8M491.2 86.2l2.6 6.8M513.8 86.2l2.6 6.8M491.2 108l2.6 6.8M513.8 108l2.6 6.8M525.3 86.2l1.4 6.8M547.9 86.2l1.4 6.8M525.3 108l1.4 6.8M547.9 108l1.4 6.8M559.4 86.2l0.3 6.8M582 86.2l0.3 6.8M559.4 108l0.3 6.8M582 108l0.3 6.8M423 122.2l4.8 5.6M445.6 122.2l4.8 5.6M423 144l4.8 5.6M445.6 144l4.8 5.6M457.1 122.2l3.7 5.6M479.7 122.2l3.7 5.6M457.1 144l3.7 5.6M479.7 144l3.7 5.6M491.2 122.2l2.6 5.6M513.8 122.2l2.6 5.6M491.2 144l2.6 5.6M513.8 144l2.6 5.6M525.3 122.2l1.4 5.6M547.9 122.2l1.4 5.6M525.3 144l1.4 5.6M547.9 144l1.4 5.6M559.4 122.2l0.3 5.6M582 122.2l0.3 5.6M559.4 144l0.3 5.6M582 144l0.3 5.6M423 158.2l4.8 4.4M445.6 158.2l4.8 4.4M423 180l4.8 4.4M445.6 180l4.8 4.4M457.1 158.2l3.7 4.4M479.7 158.2l3.7 4.4M457.1 180l3.7 4.4M479.7 180l3.7 4.4M491.2 158.2l2.6 4.4M513.8 158.2l2.6 4.4M491.2 180l2.6 4.4M513.8 180l2.6 4.4M525.3 158.2l1.4 4.4M547.9 158.2l1.4 4.4M525.3 180l1.4 4.4M547.9 180l1.4 4.4M559.4 158.2l0.3 4.4M582 158.2l0.3 4.4M559.4 180l0.3 4.4M582 180l0.3 4.4M423 194.2l4.8 3.2M445.6 194.2l4.8 3.2M423 216l4.8 3.2M445.6 216l4.8 3.2M457.1 194.2l3.7 3.2M479.7 194.2l3.7 3.2M457.1 216l3.7 3.2M479.7 216l3.7 3.2M491.2 194.2l2.6 3.2M513.8 194.2l2.6 3.2M491.2 216l2.6 3.2M513.8 216l2.6 3.2M525.3 194.2l1.4 3.2M547.9 194.2l1.4 3.2M525.3 216l1.4 3.2M547.9 216l1.4 3.2M559.4 194.2l0.3 3.2M582 194.2l0.3 3.2M559.4 216l0.3 3.2M582 216l0.3 3.2M423 230.2l4.8 2M445.6 230.2l4.8 2M423 252l4.8 2M445.6 252l4.8 2M457.1 230.2l3.7 2M479.7 230.2l3.7 2M457.1 252l3.7 2M479.7 252l3.7 2M491.2 230.2l2.6 2M513.8 230.2l2.6 2M491.2 252l2.6 2M513.8 252l2.6 2M525.3 230.2l1.4 2M547.9 230.2l1.4 2M525.3 252l1.4 2M547.9 252l1.4 2M559.4 230.2l0.3 2M582 230.2l0.3 2M559.4 252l0.3 2M582 252l0.3 2M423 266.2l4.8 0.8M445.6 266.2l4.8 0.8M423 288l4.8 0.8M445.6 288l4.8 0.8M457.1 266.2l3.7 0.8M479.7 266.2l3.7 0.8M457.1 288l3.7 0.8M479.7 288l3.7 0.8M491.2 266.2l2.6 0.8M513.8 266.2l2.6 0.8M491.2 288l2.6 0.8M513.8 288l2.6 0.8M525.3 266.2l1.4 0.8M547.9 266.2l1.4 0.8M525.3 288l1.4 0.8M547.9 288l1.4 0.8M559.4 266.2l0.3 0.8M582 266.2l0.3 0.8M559.4 288l0.3 0.8M582 288l0.3 0.8M423 302.2l4.8 -0.4M445.6 302.2l4.8 -0.4M423 324l4.8 -0.4M445.6 324l4.8 -0.4M457.1 302.2l3.7 -0.4M479.7 302.2l3.7 -0.4M457.1 324l3.7 -0.4M479.7 324l3.7 -0.4M491.2 302.2l2.6 -0.4M513.8 302.2l2.6 -0.4M491.2 324l2.6 -0.4M513.8 324l2.6 -0.4M525.3 302.2l1.4 -0.4M547.9 302.2l1.4 -0.4M525.3 324l1.4 -0.4M547.9 324l1.4 -0.4M559.4 302.2l0.3 -0.4M582 302.2l0.3 -0.4M559.4 324l0.3 -0.4M582 324l0.3 -0.4M423 338.2l4.8 -1.6M445.6 338.2l4.8 -1.6M423 360l4.8 -1.6M445.6 360l4.8 -1.6M457.1 338.2l3.7 -1.6M479.7 338.2l3.7 -1.6M457.1 360l3.7 -1.6M479.7 360l3.7 -1.6M491.2 338.2l2.6 -1.6M513.8 338.2l2.6 -1.6M491.2 360l2.6 -1.6M513.8 360l2.6 -1.6M525.3 338.2l1.4 -1.6M547.9 338.2l1.4 -1.6M525.3 360l1.4 -1.6M547.9 360l1.4 -1.6M559.4 338.2l0.3 -1.6M582 338.2l0.3 -1.6M559.4 360l0.3 -1.6M582 360l0.3 -1.6M423 374.2l4.8 -2.8M445.6 374.2l4.8 -2.8M423 396l4.8 -2.8M445.6 396l4.8 -2.8M457.1 374.2l3.7 -2.8M479.7 374.2l3.7 -2.8M457.1 396l3.7 -2.8M479.7 396l3.7 -2.8M491.2 374.2l2.6 -2.8M513.8 374.2l2.6 -2.8M491.2 396l2.6 -2.8M513.8 396l2.6 -2.8M525.3 374.2l1.4 -2.8M547.9 374.2l1.4 -2.8M525.3 396l1.4 -2.8M547.9 396l1.4 -2.8M559.4 374.2l0.3 -2.8M582 374.2l0.3 -2.8M559.4 396l0.3 -2.8M582 396l0.3 -2.8M423 410.2l4.8 -4M445.6 410.2l4.8 -4M423 432l4.8 -4M445.6 432l4.8 -4M457.1 410.2l3.7 -4M479.7 410.2l3.7 -4M457.1 432l3.7 -4M479.7 432l3.7 -4M491.2 410.2l2.6 -4M513.8 410.2l2.6 -4M491.2 432l2.6 -4M513.8 432l2.6 -4M525.3 410.2l1.4 -4M547.9 410.2l1.4 -4M525.3 432l1.4 -4M547.9 432l1.4 -4M559.4 410.2l0.3 -4M582 410.2l0.3 -4M559.4 432l0.3 -4M582 432l0.3 -4" stroke="#00ff00" stroke-width=".9" fill="none" stroke-opacity=".75"/>
<path d="M423 86.2H445.6V108H423ZM457.1 86.2H479.7V108H457.1ZM491.2 86.2H513.8V108H491.2ZM525.3 86.2H547.9V108H525.3ZM559.4 86.2H582V108H559.4ZM423 122.2H445.6V144H423ZM457.1 122.2H479.7V144H457.1ZM491.2 122.2H513.8V144H491.2ZM525.3 122.2H547.9V144H525.3ZM559.4 122.2H582V144H559.4ZM423 158.2H445.6V180H423ZM457.1 158.2H479.7V180H457.1ZM491.2 158.2H513.8V180H491.2ZM525.3 158.2H547.9V180H525.3ZM559.4 158.2H582V180H559.4ZM423 194.2H445.6V216H423ZM457.1 194.2H479.7V216H457.1ZM491.2 194.2H513.8V216H491.2ZM525.3 194.2H547.9V216H525.3ZM559.4 194.2H582V216H559.4ZM423 230.2H445.6V252H423ZM457.1 230.2H479.7V252H457.1ZM491.2 230.2H513.8V252H491.2ZM525.3 230.2H547.9V252H525.3ZM559.4 230.2H582V252H559.4ZM423 266.2H445.6V288H423ZM457.1 266.2H479.7V288H457.1ZM491.2 266.2H513.8V288H491.2ZM525.3 266.2H547.9V288H525.3ZM559.4 266.2H582V288H559.4ZM423 302.2H445.6V324H423ZM457.1 302.2H479.7V324H457.1ZM491.2 302.2H513.8V324H491.2ZM525.3 302.2H547.9V324H525.3ZM559.4 302.2H582V324H559.4ZM423 338.2H445.6V360H423ZM457.1 338.2H479.7V360H457.1ZM491.2 338.2H513.8V360H491.2ZM525.3 338.2H547.9V360H525.3ZM559.4 338.2H582V360H559.4ZM423 374.2H445.6V396H423ZM457.1 374.2H479.7V396H457.1ZM491.2 374.2H513.8V396H491.2ZM525.3 374.2H547.9V396H525.3ZM559.4 374.2H582V396H559.4ZM423 410.2H445.6V432H423ZM457.1 410.2H479.7V432H457.1ZM491.2 410.2H513.8V432H491.2ZM525.3 410.2H547.9V432H525.3ZM559.4 410.2H582V432H559.4Z" stroke="#00ff00" stroke-width="1.2" fill="none"/>
<g font-family="Liberation Sans,sans-serif" font-size="27" letter-spacing="-.7" stroke-linejoin="round">
<g fill="#022c06" stroke="#022c06" stroke-width="1.3" opacity=".85" transform="translate(.7 .8)">
<text x="439.8" y="101.5">0</text>
<text x="472.9" y="101.5">1</text>
<text x="506" y="101.5">2</text>
<text x="539" y="101.5">3</text>
<text x="572.2" y="101.5">4</text>
<text x="439.8" y="136.2">5</text>
<text x="472.9" y="136.2">6</text>
<text x="506" y="136.2">7</text>
<text x="539" y="136.2">8</text>
<text x="572.2" y="136.2">9</text>
<text x="439.8" y="170.8">10</text>
<text x="472.9" y="170.8">11</text>
<text x="506" y="170.8">12</text>
<text x="539" y="170.8">13</text>
<text x="572.2" y="170.8">14</text>
<text x="439.8" y="205.5">15</text>
<text x="472.9" y="205.5">16</text>
<text x="506" y="205.5">17</text>
<text x="539" y="205.5">18</text>
<text x="572.2" y="205.5">19</text>
<text x="439.8" y="240.1">20</text>
<text x="472.9" y="240.1">21</text>
<text x="506" y="240.1">22</text>
<text x="539" y="240.1">23</text>
<text x="572.2" y="240.1">24</text>
<text x="439.8" y="274.8">25</text>
<text x="472.9" y="274.8">26</text>
<text x="506" y="274.8">27</text>
<text x="539" y="274.8">28</text>
<text x="572.2" y="274.8">29</text>
<text x="439.8" y="309.5">30</text>
<text x="472.9" y="309.5">31</text>
<text x="506" y="309.5">32</text>
<text x="539" y="309.5">33</text>
<text x="572.2" y="309.5">34</text>
<text x="439.8" y="344.1">35</text>
<text x="472.9" y="344.1">36</text>
<text x="506" y="344.1">37</text>
<text x="539" y="344.1">38</text>
<text x="572.2" y="344.1">39</text>
<text x="439.8" y="378.8">40</text>
<text x="472.9" y="378.8">41</text>
<text x="506" y="378.8">42</text>
<text x="539" y="378.8">43</text>
<text x="572.2" y="378.8">44</text>
<text x="439.8" y="413.4">45</text>
<text x="472.9" y="413.4">46</text>
<text x="506" y="413.4">47</text>
<text x="539" y="413.4">48</text>
<text x="572.2" y="413.4">49</text>
</g>
<g fill="#008400" stroke="#022a06" stroke-width="1.05">
<text x="439.8" y="101.5">0</text>
<text x="472.9" y="101.5">1</text>
<text x="506" y="101.5">2</text>
<text x="539" y="101.5">3</text>
<text x="572.2" y="101.5">4</text>
<text x="439.8" y="136.2">5</text>
<text x="472.9" y="136.2">6</text>
<text x="506" y="136.2">7</text>
<text x="539" y="136.2">8</text>
<text x="572.2" y="136.2">9</text>
<text x="439.8" y="170.8">10</text>
<text x="472.9" y="170.8">11</text>
<text x="506" y="170.8">12</text>
<text x="539" y="170.8">13</text>
<text x="572.2" y="170.8">14</text>
<text x="439.8" y="205.5">15</text>
<text x="472.9" y="205.5">16</text>
<text x="506" y="205.5">17</text>
<text x="539" y="205.5">18</text>
<text x="572.2" y="205.5">19</text>
<text x="439.8" y="240.1">20</text>
<text x="472.9" y="240.1">21</text>
<text x="506" y="240.1">22</text>
<text x="539" y="240.1">23</text>
<text x="572.2" y="240.1">24</text>
<text x="439.8" y="274.8">25</text>
<text x="472.9" y="274.8">26</text>
<text x="506" y="274.8">27</text>
<text x="539" y="274.8">28</text>
<text x="572.2" y="274.8">29</text>
<text x="439.8" y="309.5">30</text>
<text x="472.9" y="309.5">31</text>
<text x="506" y="309.5">32</text>
<text x="539" y="309.5">33</text>
<text x="572.2" y="309.5">34</text>
<text x="439.8" y="344.1">35</text>
<text x="472.9" y="344.1">36</text>
<text x="506" y="344.1">37</text>
<text x="539" y="344.1">38</text>
<text x="572.2" y="344.1">39</text>
<text x="439.8" y="378.8">40</text>
<text x="472.9" y="378.8">41</text>
<text x="506" y="378.8">42</text>
<text x="539" y="378.8">43</text>
<text x="572.2" y="378.8">44</text>
<text x="439.8" y="413.4">45</text>
<text x="472.9" y="413.4">46</text>
<text x="506" y="413.4">47</text>
<text x="539" y="413.4">48</text>
<text x="572.2" y="413.4">49</text>
</g></g>
<path d="M378.5 403.3h1.1v1h-1.1zM378.2 170.1h1.5v1.3h-1.5zM375.7 250h1.6v2.6h-1.6zM378.5 324.2h1.7v2.4h-1.7zM373.7 384.4h1v1.3h-1zM376.7 400.4h1.2v1.8h-1.2zM376.9 296.1h1.2v1.2h-1.2zM378.1 404.9h1.1v0.9h-1.1zM378.9 313.8h1.7v2.1h-1.7zM378.1 338.2h1.1v1.1h-1.1zM378.2 254.1h1v1.4h-1zM373.6 89.4h1.5v1.7h-1.5zM379 148.3h1.4v2.3h-1.4zM377.8 296.2h1.5v1.7h-1.5zM379.5 299.9h1v1h-1zM376.3 81.5h1.2v1.9h-1.2zM378.4 452.5h0.8v0.8h-0.8zM379 312.3h1v1h-1zM378.4 140.6h1.6v1.9h-1.6zM378.5 475.6h1.7v2.5h-1.7zM379.1 109.2h1.4v1.8h-1.4zM377.8 135.1h1.1v1.8h-1.1zM376.8 275.1h1.5v1.4h-1.5zM376.5 255.4h1.3v1.2h-1.3zM377.5 479.9h1.3v1.1h-1.3zM377.1 312.7h1.3v1.9h-1.3zM378.4 367.6h1.2v1.6h-1.2zM378.4 348.4h1.3v2h-1.3zM377.7 160.2h1.3v1.6h-1.3zM378.3 277.3h0.9v1.2h-0.9zM379 206.8h1v1.1h-1zM377.5 460.6h1v0.8h-1zM377.7 486h1.4v1.4h-1.4zM377.4 70.1h1v0.9h-1zM378.3 175.2h0.9v0.9h-0.9zM375.4 337.5h1.4v1.8h-1.4zM376 271.3h0.9v1.2h-0.9zM378.5 94.3h1.6v2.1h-1.6zM378.3 379.4h0.8v0.7h-0.8zM375.4 52.6h1v1.4h-1zM376.6 349h1.6v1.9h-1.6z" fill="#d8f000"/>
<path d="M378.7 452.7h1v1h-1zM377.1 495.7h1.5v1.5h-1.5zM376.7 68.7h1.3v1.7h-1.3zM377.2 72.1h1.4v1.9h-1.4zM376.6 45.9h1.2v1.1h-1.2zM377.8 192.4h1v1.2h-1zM379.6 271.7h1.4v1.1h-1.4zM373.4 305.6h1.3v1.6h-1.3zM378.1 335.1h1.2v1.1h-1.2zM379.5 289.6h1.6v2.1h-1.6zM379.4 270.4h1.1v1.2h-1.1zM376.3 361.3h1v1.3h-1zM379.4 231.5h0.9v0.9h-0.9zM372.9 107.3h0.9v1h-0.9zM373.8 464.6h1.1v1.6h-1.1zM378.2 320.5h1.6v2h-1.6zM378.6 64.5h1.5v1.3h-1.5zM373.4 244.7h1.4v1.5h-1.4zM376.9 460.8h1.6v2.2h-1.6zM378.3 379.4h1.6v2.4h-1.6zM376.5 79.2h0.9v1.2h-0.9zM376.6 461.7h1.1v0.9h-1.1zM377.1 425.7h1.4v1.7h-1.4zM374.6 52.5h1.5v2h-1.5zM378.3 279.6h1.5v1.5h-1.5zM376.4 392.9h1.3v1.5h-1.3zM377.1 221.5h1.1v1.2h-1.1zM378.1 77.8h1.7v2.4h-1.7zM376.3 88.5h1.1v1.4h-1.1zM378.2 415.9h1.7v2.6h-1.7zM378.8 308.4h1v1.3h-1zM376.1 473.5h1.7v2.2h-1.7zM376.5 330.7h1v1.4h-1zM376.8 477h1.3v1.5h-1.3zM377.5 356.6h1.2v1.2h-1.2zM377.4 128.7h1v1h-1zM377.7 481.9h1.3v1.9h-1.3zM377.3 52.7h1.7v1.5h-1.7z" fill="#20e8e8"/>
<path d="M378.1 272.5h1v1.1h-1zM374.1 240.5h0.9v1.2h-0.9zM378.7 90.9h1.4v1.2h-1.4zM379 174.2h1.2v1.2h-1.2zM376.6 454.9h1.6v2.5h-1.6zM375.4 243.5h1.5v1.3h-1.5zM377.6 373.5h1v1h-1zM379.4 311.5h1.4v1.8h-1.4zM376.9 341.2h1.3v1.8h-1.3zM378.3 92.9h1.7v2.6h-1.7zM378.1 397.9h1.2v1.8h-1.2zM378 451.5h1v1.2h-1zM377.7 456.8h1.4v1.7h-1.4zM374.8 85.9h0.9v1.3h-0.9zM375.6 253.1h1.5v1.7h-1.5zM374.3 431.3h1.1v1.8h-1.1zM377.3 160.5h1v1.4h-1zM379.4 241.9h1.6v1.7h-1.6zM376.8 123.1h1.4v1.7h-1.4zM373.4 185.5h0.8v0.8h-0.8zM376.8 98.5h1v0.9h-1zM376.6 128.7h1.1v1.3h-1.1zM376.5 152h1.1v1.1h-1.1zM379 215.3h1.1v1.7h-1.1zM379 416h1v1.1h-1zM375.8 73.9h1.4v1.6h-1.4zM375 236h1.6v1.8h-1.6zM378.9 292h1.2v1.1h-1.2zM379 104h1.4v1.5h-1.4zM378.3 253.8h1.5v1.3h-1.5zM377.9 330.1h1.6v1.9h-1.6zM377.6 61.3h1.2v1.2h-1.2zM377.5 152.8h1v1.2h-1zM373.6 397.7h0.9v0.7h-0.9zM373.4 237.7h1.6v2h-1.6zM375.7 94.6h1v1.4h-1z" fill="#ff6a00"/>
<path d="M378.2 59.8h1v1.3h-1zM377 282.1h1.1v1h-1.1zM379 328.1h1.2v1h-1.2zM378.6 409.3h0.9v1.3h-0.9zM374.7 279.5h1.2v1.9h-1.2zM376.9 134.2h1.4v1.7h-1.4zM378.1 467.4h1.3v1.3h-1.3zM378.7 150.9h1.5v2.1h-1.5zM377.2 386h0.9v1.4h-0.9zM376.8 115.6h1v0.9h-1zM378.1 420.7h1.4v2.1h-1.4zM377.6 479.4h1.7v2.7h-1.7zM378 363.2h1.2v1.2h-1.2zM376.6 482.1h1.2v1.1h-1.2zM378.5 421.4h1.6v2h-1.6zM377.5 157.3h0.9v1.3h-0.9zM377.7 458.8h1.4v1.8h-1.4zM378.8 89h1.6v2.3h-1.6zM378.6 462.8h1.1v1.4h-1.1zM378.7 51.1h1.5v2.2h-1.5zM377.6 210.2h1.5v2h-1.5zM379.1 340.4h1.1v1.7h-1.1zM378.1 300.9h1.2v1.2h-1.2zM379.5 261.2h1.4v1.5h-1.4zM376.8 164.7h1.2v1h-1.2zM377.6 125.6h1v1h-1zM379.3 230.1h1.5v2.2h-1.5zM377.5 164.7h1.1v1.5h-1.1zM378.9 92.2h0.8v0.7h-0.8zM376.3 485.1h1v0.9h-1zM377.5 304.8h1.5v2.3h-1.5zM374.4 430.4h0.8v1.3h-0.8zM377.7 224.2h1.6v2.4h-1.6zM376.6 92.9h1v1.1h-1zM378.6 180.1h1.3v1.5h-1.3zM373.9 418h1.2v1.4h-1.2zM379.2 224.7h0.8v1h-0.8zM379.4 295.8h1v1.3h-1zM379.2 371.2h1.4v2h-1.4zM375.8 227.3h1.6v2.5h-1.6zM378.9 321.3h1.2v1.3h-1.2zM378.7 352.2h1v1.2h-1zM374.7 129.5h1.3v1.6h-1.3zM375.2 415.6h1v1.2h-1zM378.9 426.7h1.4v1.2h-1.4zM372.6 71.7h1v1.1h-1zM376.6 257.3h1.2v1.9h-1.2z" fill="#ffe000"/>
<path d="M377.4 285.5h1.4v2.2h-1.4zM379.1 330.8h1.2v1.2h-1.2zM374.6 158.9h1.3v1.8h-1.3zM378.6 63.8h0.8v0.9h-0.8zM377.7 160.3h1.1v1.6h-1.1zM376.7 192.3h1.4v1.3h-1.4zM377 336.2h1.2v1.2h-1.2zM378 142.6h1v0.9h-1zM378.1 234.3h1.2v1.5h-1.2zM378.2 177.5h1.6v2.2h-1.6zM374.9 353.2h1.5v1.5h-1.5zM378.8 64h1.5v2.1h-1.5zM379.2 328.8h1.1v1.2h-1.1zM374 398.8h1.1v1.2h-1.1zM375.9 268.6h1.6v2.5h-1.6zM373.1 342.1h1.5v1.4h-1.5zM378.4 424.6h1.3v1.5h-1.3zM377.4 398.6h1.5v1.5h-1.5zM378.5 70.7h1.7v2.5h-1.7zM377.2 281.1h1v1.2h-1zM379.1 114.4h1.3v1.4h-1.3zM373.5 132.2h1v1.5h-1zM378.5 219h1.7v2.4h-1.7zM375.2 305.7h1.6v1.9h-1.6zM378.3 246.7h1.4v2.1h-1.4zM375.9 473.2h1.5v1.7h-1.5zM378.3 426.2h1.3v1.9h-1.3zM378.9 470h1.4v1.2h-1.4zM377.8 202h1.6v2.2h-1.6zM375.5 249.7h1.2v1.3h-1.2zM378.2 328.4h1.7v2.3h-1.7zM379.3 323.1h0.8v0.7h-0.8zM376.9 123.6h1.1v1.7h-1.1zM378.2 159.4h1.2v1.8h-1.2zM375.8 354.2h0.8v0.8h-0.8zM376.6 153.5h1.6v2.2h-1.6zM377.4 401.2h1.1v1.7h-1.1zM377.9 371.5h1.1v1.2h-1.1zM378.4 338.8h0.9v1.4h-0.9zM378.6 44.9h1.5v1.9h-1.5zM377.7 194.5h1.2v1.4h-1.2zM376.8 338.8h1.1v1.3h-1.1zM377.9 462.3h1.5v2.1h-1.5zM373.2 204.5h1.1v1.6h-1.1zM377.3 358.1h0.8v1.3h-0.8z" fill="#ffb400"/>
<path d="M376.5 63.1h1v1.6h-1zM375.7 498.5h1v0.9h-1zM373.6 450.3h1v1.1h-1zM378.1 285.5h0.8v0.9h-0.8zM378.1 467.5h0.8v0.8h-0.8zM377.1 394.5h1.1v1.5h-1.1zM379.2 101h1.3v1.4h-1.3zM375.7 345.1h1.1v1.2h-1.1zM375.7 266.9h1.7v1.7h-1.7zM378.3 323.6h1.1v0.9h-1.1zM379.3 163.9h1.2v1.5h-1.2zM378.6 234.4h1.4v1.1h-1.4zM374.6 368.9h0.9v1h-0.9zM374.7 296.3h1.2v1.3h-1.2zM374.6 92.6h1.2v1.8h-1.2zM377.1 122.5h1.4v1.6h-1.4zM375.7 58.6h1.3v1.6h-1.3zM376.1 67.1h0.8v0.7h-0.8zM377.3 114.9h1.6v1.7h-1.6zM378.6 137.4h1v1.5h-1zM377.4 144.3h1.1v1.6h-1.1zM374.6 455.7h0.9v1.2h-0.9zM377.2 465.8h1.6v2.4h-1.6zM377.9 490.2h0.9v1.1h-0.9zM379.2 439.7h1.3v1.4h-1.3zM375.3 364.1h1.4v1.5h-1.4zM376.4 51.5h1.3v1.5h-1.3zM374.1 412.8h1.6v1.3h-1.6zM379.2 336.2h1v1.4h-1zM377.2 61h1v1.2h-1zM374.5 136.4h1.2v1h-1.2zM378 70.5h1.3v1.8h-1.3zM378.5 47.9h0.8v1.2h-0.8zM378.5 151.9h1v1.1h-1zM375.7 481.5h1v1h-1zM378.3 311.3h1v1.5h-1zM378.1 256.4h1.1v1.1h-1.1zM375.6 388.9h0.9v1.2h-0.9zM378.9 94.1h1.6v2.5h-1.6zM377.6 246.4h1.3v1.1h-1.3zM374.8 78.7h1.5v2.1h-1.5zM378.2 482.6h1.4v1.9h-1.4zM379 213.5h1.4v2.1h-1.4zM373.7 265.6h1.2v1.8h-1.2z" fill="#ff9a00"/>
<path d="M377.5 374.2h1v1.2h-1zM378.3 121.4h0.8v0.7h-0.8zM378.4 337.1h0.8v1.2h-0.8zM377 73.1h1.5v2.3h-1.5zM378.8 137h1.6v2.3h-1.6zM379.2 331.6h1.1v1h-1.1zM377.3 57.3h1.3v1.4h-1.3zM377.7 365h1.6v2h-1.6zM374 333.9h0.9v1.1h-0.9zM377.4 205.5h1.6v1.8h-1.6zM374.4 132.7h1.4v1.4h-1.4zM376.8 355.8h1.2v1.6h-1.2zM376.2 200.7h1v1.3h-1zM377.9 119.7h1.6v2.1h-1.6zM374.6 382.1h1.2v1.5h-1.2zM379 112.4h1.4v2.2h-1.4zM379.3 435.3h1v0.9h-1zM376.1 305.8h0.9v1h-0.9zM374.2 66.3h1.2v1.8h-1.2zM377.7 335.4h1.6v1.6h-1.6zM377.9 106.9h1.2v1.9h-1.2zM378.3 303.9h1v1.1h-1zM376.4 402.9h1.6v1.6h-1.6zM378.5 306.8h1v1.5h-1zM378.4 395.9h0.9v1.2h-0.9zM376.9 331.2h1.2v0.9h-1.2zM376.3 496.8h1.1v1.2h-1.1zM377.5 206.5h1.7v2h-1.7zM377.4 384.1h1.1v1.7h-1.1zM378.5 230.9h1.5v1.2h-1.5zM379.4 225.2h1.6v1.5h-1.6zM376.8 208.9h1.1v1.7h-1.1zM377 114.2h1.4v1.4h-1.4zM379.4 211.2h1v1.3h-1zM379 148.8h1v0.8h-1zM376.8 330.4h1v1h-1zM378.5 324.2h1v1.1h-1zM377.8 93.5h1.1v1h-1.1zM378.3 496.4h1.5v2.1h-1.5zM377.9 158.9h0.9v1.1h-0.9zM378.5 332.6h1.5v1.3h-1.5zM376.1 304.7h0.9v1.3h-0.9zM379.1 353.5h1.3v1.6h-1.3zM376.4 222.1h1.3v1.2h-1.3zM377.1 62.1h1.2v1.7h-1.2z" fill="#ffc800"/>
<path d="M378.1 388.4h1.4v1.3h-1.4zM378.8 447.6h1.6v2.1h-1.6zM379.4 160.5h1v1.4h-1zM378.4 236.6h1.2v1.5h-1.2zM375.8 109.8h1.4v1.6h-1.4zM378.9 180.9h1.2v1.6h-1.2zM378 82h1.1v0.9h-1.1zM375 127.8h1v1.4h-1zM379.2 281.6h1.5v1.9h-1.5zM378.1 337.7h1.4v1.6h-1.4zM378 374.6h1.5v2.4h-1.5zM379.2 155.5h1.1v1.5h-1.1zM374 81.9h1.3v1.2h-1.3zM377.7 385.8h1.3v1.6h-1.3zM374.7 197.9h1.7v1.5h-1.7zM375.6 301h1.4v1.3h-1.4zM376.4 135.4h0.9v1.3h-0.9zM375.5 157.5h1.3v1.3h-1.3zM375.6 174.2h1v1h-1zM378.9 257.3h1v1.6h-1zM378 499.2h1.3v1.4h-1.3zM377.8 88.2h1.1v1.5h-1.1zM378 467.3h1.2v1.4h-1.2zM377.1 51.9h1v1.3h-1zM376.3 204.3h1.5v1.9h-1.5zM375.6 84.8h1.6v1.3h-1.6zM375.3 174.9h1.5v1.6h-1.5zM378.2 54.5h1.7v1.8h-1.7zM379 460.9h1.4v2.3h-1.4zM379.3 194.6h1.4v1.6h-1.4zM378.4 329.3h0.9v0.8h-0.9zM376 213.2h1.6v1.4h-1.6zM378.4 75.9h0.8v1.3h-0.8zM378.2 307.6h1.3v1.4h-1.3z" fill="#00e0ff"/>
<path d="M373.9 57.1h1.4v2.1h-1.4zM371.3 427.1h1.4v1.6h-1.4zM375.6 80.8h1v1.3h-1zM370.2 176.9h1.1v1.3h-1.1zM366.7 388.8h1.2v1.3h-1.2zM374.8 184.7h1.5v2.1h-1.5zM372.5 207.5h1.1v1.8h-1.1zM376.4 271.3h1.5v2.2h-1.5zM375.1 267h1.2v1.8h-1.2zM376.6 292h1v1h-1zM374.4 183.7h1.1v1.4h-1.1zM375.1 393.5h1.1v1.1h-1.1zM372.9 200.7h1.4v2.1h-1.4z" fill="#ff6a00"/>
<path d="M375.8 389.6h1.1v1.2h-1.1zM375.7 95h1.4v1.3h-1.4zM375.9 176.2h1.2v1h-1.2zM375.3 294.9h1.5v2h-1.5zM372.8 398h0.9v0.8h-0.9zM374.5 344.1h1.4v1.9h-1.4zM375.3 121.1h1.5v1.9h-1.5zM374 74.5h1.1v0.9h-1.1zM374.2 285.1h1.5v1.3h-1.5zM374.4 173.7h0.9v0.9h-0.9zM376.2 222.9h1.6v1.7h-1.6zM374.5 161.5h1.3v1.6h-1.3zM376.6 413.8h1.5v2.2h-1.5zM374.9 155.2h1.6v1.7h-1.6zM373.8 285.3h1.7v2.1h-1.7zM371.1 335.2h0.9v1h-0.9zM374.3 431.9h0.8v0.8h-0.8z" fill="#ffc800"/>
<path d="M372.7 186.3h1.1v1.2h-1.1zM376.7 195.6h0.9v0.9h-0.9zM376.6 381.7h1.4v1.2h-1.4zM375.1 331.5h1.3v1.1h-1.3zM372.8 118.5h1.1v1.7h-1.1zM375.2 409h1v1.2h-1zM375.3 253.2h1.1v1.4h-1.1zM373.1 264.6h0.9v0.8h-0.9zM373.6 352.3h1.3v1.8h-1.3zM372.9 139.3h1.4v2.1h-1.4zM372.7 334.2h1.2v1h-1.2zM370.3 386h1.7v2.3h-1.7zM372.7 362.6h0.9v0.8h-0.9zM376.3 84.6h0.8v0.7h-0.8z" fill="#ffe000"/>
<path d="M375.9 225.4h0.9v0.9h-0.9zM374.7 163.7h1.5v1.6h-1.5zM373 349.6h0.9v1h-0.9zM376 409.4h1.5v1.8h-1.5zM375.1 168.8h1.2v1.6h-1.2zM374.4 276.6h1.3v2.1h-1.3zM372.6 145.9h1.6v2.4h-1.6z" fill="#ffb400"/>
<path d="M375.4 270.7h1.4v2.2h-1.4zM374.9 129.7h1.3v1.8h-1.3zM372.4 351.1h1.1v1.7h-1.1zM369.8 292.7h1.6v1.5h-1.6zM371.2 66.9h1.3v1.8h-1.3zM375.3 292.1h1.3v1.5h-1.3z" fill="#d8f000"/>
<path d="M370.6 150.4h1.4v1.8h-1.4zM375.5 201.6h1.6v1.4h-1.6zM376.4 197.4h1v0.9h-1z" fill="#ff9a00"/>
<path d="M370.4 491.5h1.5v1.4h-1.5zM380.2 535.7h2v2.1h-2zM377.2 499.6h1v0.9h-1zM382.9 527.3h1.6v2.4h-1.6zM379.3 527.6h1.8v2h-1.8zM375.6 496h1.5v1.9h-1.5zM376.4 490.6h1.6v1.5h-1.6zM377.6 507.2h1.3v1.8h-1.3zM376.3 488.8h1.4v1.8h-1.4zM381.8 526.1h1.1v1.1h-1.1zM378.1 518h1v1.4h-1zM373.8 490.8h1.8v2h-1.8zM375.6 493.6h1.3v1.4h-1.3zM381.5 525.1h1.9v1.8h-1.9zM378.2 510h1.9v1.7h-1.9zM379.5 512.7h1v1.2h-1zM372.7 511.9h1.2v1.1h-1.2zM373.9 496.2h1.7v2.7h-1.7zM376.3 489h1.7v1.4h-1.7zM374.8 493h1.5v1.4h-1.5zM376.6 500.4h1.7v2.1h-1.7zM377.5 506.6h1.8v2.8h-1.8zM376 494.3h1.7v2.4h-1.7zM377.2 500.4h1.9v2.3h-1.9zM372.8 496.7h1.1v1.2h-1.1zM383.5 527.9h1.3v1.5h-1.3zM383 526.4h1.8v2.5h-1.8zM375.6 496.7h0.9v1.1h-0.9z" fill="#ff9a00"/>
<path d="M378.4 520.3h1.1v1.3h-1.1zM387.8 535.1h1.9v1.9h-1.9zM382.9 526.2h1.9v1.5h-1.9zM371.6 505h1.8v2.7h-1.8zM369.6 503.8h1.2v1.6h-1.2zM387.1 532.2h1.8v2h-1.8zM378.6 516.9h2v2.5h-2zM371.9 512.3h1.4v2h-1.4zM378.5 518.6h1.9v2.3h-1.9zM375.3 515.2h1.1v1.4h-1.1zM369.8 493.8h1.2v1.5h-1.2zM373.5 490.7h1.4v1.5h-1.4zM377.2 487.9h1.3v2h-1.3zM378.6 522.2h1.4v1.7h-1.4zM375.1 490.5h0.9v1.4h-0.9zM381.7 525.6h1.5v2.1h-1.5zM379.6 514.9h1.8v2.6h-1.8zM374.2 502.5h1v0.8h-1zM376.7 504.3h1.4v1.9h-1.4zM373.8 503.5h1.6v2h-1.6zM371 497.8h1.7v1.4h-1.7zM380.8 519.2h1.3v1.8h-1.3zM385.7 533.1h1v1.3h-1zM374.8 498.3h1.5v1.5h-1.5zM379.1 515.4h1.3v1.7h-1.3zM369.9 513.2h1.6v2.1h-1.6zM380 524.9h1.3v1.2h-1.3zM373.6 505.7h1.9v2.8h-1.9zM375.5 506h1.9v2.8h-1.9zM379.5 512.6h1.5v2.3h-1.5zM376.6 492.6h1.7v1.9h-1.7zM378.2 499.4h1.3v1.3h-1.3zM384.9 533.4h1.9v2.5h-1.9zM376.4 486.8h1.8v2.5h-1.8zM378.4 514.3h1v1h-1zM375.6 503.8h1.9v2.2h-1.9zM382.2 528.9h1.4v2.1h-1.4z" fill="#ffb400"/>
<path d="M377.2 496.8h2v2.7h-2zM377.1 515.5h1.5v1.3h-1.5zM374.9 508.3h1.7v2.4h-1.7zM378.3 492.8h1.2v1.3h-1.2zM377.9 491.1h1v1.2h-1zM376.4 523.4h1.8v2.9h-1.8zM372.8 520.1h1.2v1.8h-1.2zM378.6 506.3h1.1v1.3h-1.1zM373 510.9h1.7v2.1h-1.7zM380.7 518.9h1.7v2.5h-1.7zM376.9 532.2h1v1.5h-1zM376.9 500h1.7v1.6h-1.7zM374.1 499.6h1.9v2.4h-1.9zM377.1 501h0.9v1.4h-0.9zM374.9 503.6h1.1v1.4h-1.1zM374.6 494.2h1.3v1.3h-1.3zM378.8 513.8h2v2.7h-2zM378.4 524h1.6v1.3h-1.6zM383.7 533h1v0.9h-1zM376.1 495.2h1.2v1.3h-1.2zM381.6 527.5h0.9v0.8h-0.9zM388.5 535.1h1.6v1.6h-1.6zM377.6 496.7h1.6v1.5h-1.6zM377.2 502.5h1.4v1.6h-1.4zM377.3 503.1h1.2v1h-1.2zM382.1 530.9h0.9v1.3h-0.9zM377.5 503.7h1.6v2.2h-1.6zM385.9 530.8h1.4v1.1h-1.4z" fill="#ffc800"/>
<path d="M376.2 488.4h1.8v1.8h-1.8zM374.8 502.3h1.2v1.6h-1.2zM382.4 525.2h1.7v2.2h-1.7zM381 523.9h1.1v1.1h-1.1zM383.8 533.4h1.9v2.1h-1.9zM375.4 493.5h1.6v2h-1.6zM377.4 519h1.8v1.5h-1.8zM371 501.3h1.2v1.7h-1.2zM373.9 504.8h0.9v1.5h-0.9zM380.7 519.7h1.6v2.4h-1.6zM384 535.8h1.2v1h-1.2zM380.2 518.8h1v1h-1zM377.5 510.1h1v1.5h-1zM377.2 499.5h1.5v1.8h-1.5zM378.2 527.1h1v1.6h-1zM374.9 488.1h1.8v1.6h-1.8zM377.2 511.6h1.1v1.5h-1.1zM370.8 499h1.7v2.5h-1.7zM376.9 534h1v1.4h-1zM380.4 516.2h1.4v1.7h-1.4zM375.6 490.2h0.9v0.8h-0.9zM375.9 492.8h1.7v2.3h-1.7zM375.9 489.8h2v2h-2zM378.4 502.3h1.1v1h-1.1zM374.1 510.6h2v2.7h-2zM380.8 522.9h1v1.5h-1zM380.4 520.1h1.3v1.4h-1.3zM376.4 506.4h1.1v0.9h-1.1zM377.2 513.8h1.8v2.7h-1.8zM382.6 529.4h2v3.1h-2zM382.3 523.2h1.7v2.4h-1.7zM377.3 517.5h1.2v1.5h-1.2zM377.2 490.1h1.3v1.5h-1.3zM375.1 486.4h1.1v1.2h-1.1z" fill="#ffe000"/>
<path d="M375.4 507.1h1.1v1.6h-1.1zM377.6 516.4h1.6v2.5h-1.6zM378.4 508.1h1.6v2.6h-1.6zM376.7 494.6h1.8v1.7h-1.8zM376.5 508.6h1v1h-1zM376.5 489.2h1v1.1h-1zM375.5 487.3h1.4v1.6h-1.4zM376.8 509.7h1.9v2.1h-1.9zM387.7 533.6h1.1v1.2h-1.1zM376.6 506.7h1.7v2.1h-1.7zM375.5 490.4h2v2.2h-2zM380.6 525.6h1.4v1.7h-1.4zM378.8 523.2h1.5v1.7h-1.5zM379.6 525.6h1.6v2.3h-1.6zM377.7 486.2h1v1.2h-1zM376 499.6h1.7v1.9h-1.7zM379.5 512.9h1.6v2.3h-1.6zM374.8 497.2h1.9v2h-1.9zM376.5 501.6h1.6v1.3h-1.6zM376.3 501.5h1.3v1.4h-1.3zM388.3 534.2h1.9v2.3h-1.9zM373.4 499.9h1.8v2.6h-1.8zM377.3 499.8h1.3v1.6h-1.3zM369.4 500.1h1.9v2.9h-1.9zM382.3 526.4h0.9v0.8h-0.9zM376 490.5h1.9v1.9h-1.9zM376.9 491.1h1.8v2.1h-1.8zM382.9 533.3h1.7v1.6h-1.7zM376.9 491.2h1.1v1.4h-1.1zM385.9 532h1.7v2.3h-1.7z" fill="#ff6a00"/>
<path d="M378.1 486h1.5v1.8h-1.5zM374.8 502.1h1.6v2.1h-1.6zM378.9 521.1h1.6v2h-1.6zM376.7 507.5h1.2v1.1h-1.2zM377.8 488h1.6v1.8h-1.6zM377.3 505.4h1.8v2.7h-1.8zM382.5 526.8h1.3v2h-1.3zM377 495.3h1.5v1.5h-1.5zM378.3 501.7h1.5v2.3h-1.5zM374.3 488.6h1.2v1.1h-1.2zM381 521.5h1.8v2.3h-1.8zM375.8 512.7h1.7v1.5h-1.7zM378 500.7h1.3v1.7h-1.3zM373.9 501.5h1.2v1.7h-1.2zM379.5 525.4h0.9v1.2h-0.9zM374.3 518h1.9v2h-1.9zM382.8 528.4h1.2v1.4h-1.2zM375.5 501.9h1.9v1.8h-1.9zM375 503.6h1.8v2.5h-1.8zM378.7 521.5h1.7v2.4h-1.7zM380.2 527.7h1.7v1.8h-1.7zM376 499.9h1.8v1.9h-1.8zM379.3 520.9h1.2v1.9h-1.2zM378.3 499.3h1.5v2h-1.5zM378.2 528.6h1.6v1.9h-1.6zM373.8 519.6h1.7v1.6h-1.7zM384.6 530.8h1.6v1.6h-1.6zM378.7 514.4h0.9v0.8h-0.9zM378.1 524.2h2v2.5h-2zM376.3 497.2h1.3v1.2h-1.3zM388.7 534.5h1.9v2.2h-1.9zM382.9 527.1h1.5v1.7h-1.5zM376.8 488.2h1.9v2.9h-1.9z" fill="#d8f000"/>
<path d="M624.8 89.8h1v1.3h-1zM628 81.5h1.6v1.4h-1.6zM626.4 83.8h1.5v1.2h-1.5zM626.2 89.4h1.5v1.9h-1.5zM624.6 47h1v1.4h-1zM624.5 105.9h1.7v2.6h-1.7zM627.4 111.6h1v0.8h-1z" fill="#00b4ff"/>
<path d="M624.9 103.8h1.7v1.4h-1.7zM626.8 46.6h1.2v1.1h-1.2zM625.3 44.5h1.5v2.1h-1.5zM624.7 107.5h1.6v1.4h-1.6zM624.9 45.4h1.3v1.8h-1.3zM626.1 93.2h1.4v2h-1.4zM625.3 112.7h1.6v1.4h-1.6zM626 43.6h0.9v1.2h-0.9zM625.9 103.1h1.5v2.2h-1.5z" fill="#00d8ff"/>
<path d="M625 115.4h1.3v1.1h-1.3zM624.9 65.5h1.2v1.8h-1.2zM624.9 47.5h1.4v1.6h-1.4zM624 100.9h1.1v1.2h-1.1z" fill="#1a8cff"/>
<path d="M624.7 97.2h1.4v1.5h-1.4zM624.4 43.6h1.5v1.5h-1.5zM624.4 101.1h1.5v2.3h-1.5zM627 101.8h1.6v2.3h-1.6zM626 56.3h0.9v1.3h-0.9z" fill="#00f0ff"/>
<path d="M627.6 310.6h1.1v1.7h-1.1zM628.4 161.2h1.5v1.8h-1.5zM630.5 437.8h0.8v0.9h-0.8zM629.6 331.3h1.4v1.2h-1.4zM627.1 348.7h1.3v1.9h-1.3zM627.8 150.1h1.4v1.9h-1.4zM627.7 247.6h1.1v1.2h-1.1zM627.8 287.8h1.4v1.4h-1.4zM628.2 450.6h1v0.9h-1zM625.8 170.4h0.9v1.2h-0.9zM628.5 354.2h1.1v1.6h-1.1zM626.9 461.5h1.6v2.2h-1.6zM628.2 292.1h0.9v1h-0.9zM630.6 297.4h1.3v1.9h-1.3zM628.5 305.2h1.2v1.3h-1.2zM629 444.9h1v0.9h-1zM627.5 340.3h1.5v1.6h-1.5zM629.8 414.4h0.8v1.2h-0.8zM629.7 326h1v1.2h-1zM629.4 436.1h1v1.6h-1zM628.2 435h1.2v1.8h-1.2zM628.4 372.1h1.7v1.9h-1.7zM628.9 305.4h1.1v0.9h-1.1zM627 193.2h1.3v1.7h-1.3zM628.8 282.2h1.4v1.2h-1.4zM625.5 148.6h1.5v1.7h-1.5zM630.9 388.9h1.2v1.3h-1.2zM627.1 455h1.3v1.9h-1.3zM628.9 301.9h1.7v1.8h-1.7zM626.1 144.5h1.1v1.4h-1.1zM627.6 435.3h1.7v1.6h-1.7zM630 234.6h1.1v1.2h-1.1zM628.4 405.5h1.1v1h-1.1zM631.9 415.7h1.7v2h-1.7zM627.3 284.3h1.5v1.5h-1.5zM629.1 231.9h1.2v1.7h-1.2zM627.7 354.6h1v1.2h-1zM628.6 156.9h1.5v1.3h-1.5zM625.2 194.6h1.1v1.3h-1.1zM630.9 439h1.6v1.3h-1.6zM627.6 332.7h1v1h-1zM625.7 199.7h1.5v2.3h-1.5zM625.5 182.1h1.5v1.5h-1.5zM629.2 370.7h1.4v2.1h-1.4zM631.1 203.5h1.6v2h-1.6zM627.6 187.4h1.7v1.5h-1.7zM630.2 429.1h1.3v1.8h-1.3zM628.6 443.4h1.6v1.8h-1.6zM629 362.4h1v1h-1zM631.5 420.9h1.2v1.8h-1.2zM627.6 275.2h1.6v1.4h-1.6zM627.5 279.9h1.6v1.5h-1.6zM627.5 350.7h1.1v1h-1.1zM630.3 300.2h1.5v1.7h-1.5zM631.6 418.7h1.6v2.3h-1.6zM627.5 456.1h1.3v1.5h-1.3zM629.5 283.1h1.1v1.3h-1.1zM631.8 428.8h1.3v1.7h-1.3zM627.1 350.4h0.9v1.2h-0.9z" fill="#1a8cff"/>
<path d="M626.6 238.4h1.6v2h-1.6zM628.8 376.7h0.9v1.2h-0.9zM628 356.4h1v1.6h-1zM627.1 187.3h0.9v1.4h-0.9zM624.5 144.7h1.3v1.1h-1.3zM625 135.1h1.2v1.1h-1.2zM631.5 249.6h1.3v1.6h-1.3zM628.2 187.1h1.3v1.7h-1.3zM627.8 130.4h1.2v1.2h-1.2zM629.4 326.2h1.4v1.5h-1.4zM629.4 275.3h1.6v1.7h-1.6zM627.5 255h1.4v1.7h-1.4zM626.5 454.9h1.4v1.9h-1.4zM631.4 287.7h1.4v1.6h-1.4zM625 169h1v1.3h-1zM629.5 430.2h1.4v1.6h-1.4zM629.6 330.5h0.8v1.2h-0.8zM627.2 216.5h0.8v0.7h-0.8zM629.1 294.7h1v1.4h-1zM629.1 369.2h1v1.5h-1zM631 287.8h1.2v1.1h-1.2zM629.5 305h1.1v0.9h-1.1zM629.1 289.4h1.1v1h-1.1zM631.2 253.2h1.6v1.5h-1.6zM630.8 421.1h0.9v0.9h-0.9zM625.3 154.6h1.7v1.4h-1.7zM628 438.9h1.4v1.9h-1.4zM629.4 223h1.6v2.5h-1.6zM630.7 311h1.1v1.2h-1.1zM630.8 416.1h0.9v1.3h-0.9zM628.8 159.6h1.1v1.7h-1.1zM626.5 133.8h1.2v1.2h-1.2zM629.4 232.5h1.6v2h-1.6zM626.6 469.2h1.2v1.8h-1.2zM629.3 445h1.4v1.6h-1.4zM629 398.9h1.3v1.3h-1.3zM630.3 429.7h1.1v1.8h-1.1zM628 446.8h1.4v1.6h-1.4zM628.4 408.6h1.6v2.2h-1.6zM629.5 271.4h0.8v1.2h-0.8zM628.7 338.8h1.5v2.3h-1.5zM627.6 223.6h0.9v1.2h-0.9zM630 403.3h1.3v1.4h-1.3zM627.7 212.8h1.6v1.7h-1.6zM628.4 258.8h1.1v1.1h-1.1zM626.7 239.7h1.4v1.2h-1.4zM626.9 203.7h1.5v2.3h-1.5zM628.1 315.1h1.6v2.3h-1.6zM626.7 462h0.9v1h-0.9zM628.9 433h1.5v1.8h-1.5zM630.1 339.7h1.3v1.5h-1.3zM628.1 362.5h0.9v1.1h-0.9zM628.9 467.8h1v1.6h-1zM625.4 126.5h1.1v1.5h-1.1zM625.4 136.5h1.6v1.5h-1.6zM627.3 332.3h1.6v2.2h-1.6zM627.5 243.4h0.9v1.2h-0.9zM630.7 445.8h1v1h-1zM628.1 437.7h1.4v1.8h-1.4zM628.8 290.9h1v1.3h-1zM628.4 328.3h0.9v1h-0.9zM627.6 313.9h1.1v1.1h-1.1zM628.9 333.7h1v1.2h-1zM630.7 197.3h0.9v1.2h-0.9zM629 371.1h0.8v1.3h-0.8zM626.9 194.9h0.9v0.9h-0.9zM625.6 163.1h1.5v1.4h-1.5zM630.1 298.5h1.2v1.6h-1.2zM626.6 206.5h0.9v0.9h-0.9z" fill="#00d8ff"/>
<path d="M627.2 241.2h1.2v1.5h-1.2zM628.1 304h1.4v1.4h-1.4zM627.5 165.8h1.4v1.8h-1.4zM629 382.4h1.5v1.6h-1.5zM630 456.4h1.4v1.8h-1.4zM628.5 280.3h1.2v1.3h-1.2zM632.3 412.1h1v1.4h-1zM625.4 130.1h1.6v2.4h-1.6zM625.3 182.3h1.4v2.1h-1.4zM625.3 182.2h0.8v1.2h-0.8zM633.3 388.1h1.6v2.1h-1.6zM629.7 316.6h1.2v1.9h-1.2zM627 271.9h0.9v0.7h-0.9zM627.7 362h0.8v1.2h-0.8zM629.7 420.8h1.1v1.5h-1.1zM633.3 452.2h1.4v1.3h-1.4zM625 132.9h1.1v1.1h-1.1zM631.1 370.5h0.9v1.2h-0.9zM629.8 219.5h1.7v2.1h-1.7zM630.4 430.9h0.9v1h-0.9zM626.2 152.7h1v1.5h-1zM628.4 363.8h1v1.2h-1zM628.2 460h0.9v1h-0.9zM630.7 404.9h1.4v1.6h-1.4zM625.9 165.4h1.3v1.7h-1.3zM629.1 368.2h1.7v1.8h-1.7zM629.1 426.9h1.3v2h-1.3zM626 154.6h1v1h-1zM629.2 401.7h0.9v0.8h-0.9zM631.1 302.2h0.9v1.1h-0.9zM626.4 149.2h1v1.2h-1zM627.3 234h1.2v1.1h-1.2zM632 405.6h1.1v0.9h-1.1zM631.1 376.6h1.6v2.1h-1.6zM629.8 266.6h1.5v2.2h-1.5zM630.4 347.3h0.8v1.2h-0.8zM631.1 321.4h0.8v0.9h-0.8zM629.7 460.5h0.8v1h-0.8zM626.7 255.4h1.5v1.5h-1.5zM625.7 144.1h1.3v1.5h-1.3zM632.1 283.7h1.1v1.8h-1.1zM626.7 229.6h0.9v1.1h-0.9zM627.7 287.8h1.3v1.2h-1.3zM628.3 368.2h1.6v1.8h-1.6zM626.3 197.3h1.5v1.3h-1.5zM627.4 342.2h1.4v1.8h-1.4zM632.4 205.3h1.4v1.3h-1.4zM628 301.4h1.5v1.8h-1.5zM626.5 141h1.1v1.2h-1.1zM628.8 414.2h1v1h-1zM629.3 360.3h1.5v1.9h-1.5zM627 264.8h1v1.4h-1zM627.6 445.7h1v1.1h-1zM626.8 206.9h0.9v1.2h-0.9zM632.4 370h1.3v1h-1.3zM628.1 382.5h1v1.2h-1zM627.7 248.9h0.9v0.9h-0.9z" fill="#00b4ff"/>
<path d="M627.4 349.2h1.3v2h-1.3zM628.9 376.3h0.9v1h-0.9zM628.4 292h1v0.9h-1zM624.8 153.7h1v1.5h-1zM629.3 249.6h0.9v1.1h-0.9zM627.6 287.3h1.1v1.1h-1.1zM626.1 461.4h1v1.3h-1zM630.5 413.8h1.3v1.7h-1.3zM629.9 455.1h1v0.9h-1zM631.4 458.6h1.6v1.4h-1.6zM626.6 457h1.6v1.5h-1.6zM626.6 242.3h1.6v2.5h-1.6zM633.8 396.1h1v0.9h-1zM628.4 369.3h1.1v1.6h-1.1zM628.5 281.7h1.1v1.2h-1.1zM628.9 418.3h0.9v1.3h-0.9zM630.9 155.5h1v1h-1zM628.2 374.9h1.4v1.8h-1.4zM629.8 419h1.6v2.3h-1.6zM630.5 432.4h0.9v1h-0.9zM627.8 260.7h1.5v1.3h-1.5zM629.4 284.4h1.2v1.8h-1.2zM627.8 434.7h1.3v1.2h-1.3zM626 167.9h1.1v1.3h-1.1zM629.5 276.7h1.7v2h-1.7zM626.9 246.4h0.9v1h-0.9zM628.8 412.9h1.5v1.6h-1.5zM627.1 342.3h1.6v2.5h-1.6zM627.5 175.1h1.1v1.6h-1.1zM628.1 328.6h1.7v2.2h-1.7zM628.2 308.5h1.6v1.5h-1.6zM625.2 176.3h1.2v1.4h-1.2zM627.8 364.6h1v0.9h-1zM630.2 420.7h1.1v1.1h-1.1zM632.2 355.9h1.3v1.4h-1.3zM632.7 290.4h0.9v0.9h-0.9zM630.1 466.1h0.8v1.2h-0.8zM627.6 322.8h1.6v2.2h-1.6zM628.1 422.9h1.2v1.8h-1.2zM629 308.9h0.9v1.3h-0.9zM629.9 287h0.9v1.3h-0.9zM625.5 155.2h1.4v1.5h-1.4zM627.1 257.5h1.3v1.2h-1.3zM628.6 425.4h0.8v1.1h-0.8zM628.3 409.3h1.2v1.4h-1.2z" fill="#00f0ff"/>
<path d="M626.4 307.2h0.8v1.3h-0.8zM625.4 443.7h0.8v1.2h-0.8zM625.7 333.2h1v1.4h-1zM624.6 196.8h1.2v1.7h-1.2zM625.8 290.2h1v0.8h-1zM624 136.6h1.1v1.1h-1.1zM624.2 495.4h1.3v1.9h-1.3z" fill="#ffb000"/>
<path d="M623.5 121.3h0.8v0.8h-0.8zM623.9 213h1.5v1.6h-1.5zM624.5 468.7h1.4v2h-1.4zM626.9 411.8h1.3v1.2h-1.3zM624.8 196.9h1.2v1.3h-1.2zM624.2 143.2h1.2v1.9h-1.2zM625.4 454.3h1.2v1h-1.2zM626.8 411.1h1.5v2.2h-1.5zM624.1 204.4h1v1.4h-1zM624.1 150.1h0.8v1.2h-0.8z" fill="#ffd800"/>
<path d="M622.7 134.3h1.5v1.5h-1.5zM623.5 167.3h1.1v1.7h-1.1zM625.6 146.2h1.3v1.2h-1.3zM623.4 191.1h1v0.8h-1zM623.1 130.1h1v1.5h-1zM623 143.4h1.3v1.3h-1.3zM627.8 259.5h1.4v1.3h-1.4zM625.9 290.4h1.3v1.9h-1.3zM626.8 377h0.9v1.3h-0.9z" fill="#c8f000"/>
<path d="M632.9 413.8h1.2v1.5h-1.2zM629.4 289h1.2v1.6h-1.2zM629.7 350.8h0.9v1h-0.9zM629.2 352.5h1v1.5h-1zM630.8 301.1h1v1.2h-1zM627.2 222.6h1v1.4h-1zM626.7 194.5h1.2v1.6h-1.2zM629.8 279.3h1.3v2.1h-1.3zM629 271.3h1.4v1.8h-1.4zM628.8 362.7h1.1v1.3h-1.1zM628.9 332.9h1.5v2.2h-1.5zM626.9 200.3h1.4v1.7h-1.4zM628.3 249.2h1v0.8h-1zM626.9 165.9h1.6v1.8h-1.6zM628.7 229.9h1.6v2.2h-1.6zM629.9 243.3h1v1.5h-1zM630.1 431.8h1.1v1.1h-1.1zM630.4 394.5h1v1.6h-1zM627.2 465.9h1.6v1.8h-1.6zM629.4 252.7h1.4v1.3h-1.4zM625.7 132.3h1.4v1.1h-1.4zM629.6 356h1v0.9h-1zM629.5 325.1h1.3v1.1h-1.3zM632.1 320.1h0.9v0.8h-0.9zM626.7 194.5h1v1.6h-1zM625.8 125.4h1.1v1.1h-1.1zM630.1 325.5h1.1v1.3h-1.1zM629.4 312.5h1.4v2.2h-1.4zM627.6 139h1.1v1.4h-1.1zM627.8 181.3h1.6v2.3h-1.6zM627 156.6h1v1.6h-1zM630.6 427.3h1.4v1.2h-1.4zM629.1 151.8h1.1v1.2h-1.1zM629.8 279.4h1.1v1h-1.1zM629.6 304.8h0.9v1.3h-0.9zM627.5 193.3h1.1v1.1h-1.1zM626.9 149.6h1.6v2.3h-1.6zM630.1 248.1h0.9v1h-0.9zM628.2 266.1h1.6v1.5h-1.6zM626.7 121.3h1.2v1.4h-1.2zM626.4 201.5h1.4v1.3h-1.4zM628.7 440.9h1.1v1.5h-1.1zM629 356.5h1.2v1.7h-1.2zM629.7 309.6h0.9v1.3h-0.9zM629.9 389.6h1.3v1.4h-1.3zM629.3 307h0.9v0.9h-0.9zM631.4 357.5h1.2v1.7h-1.2zM629.6 380h1.5v1.7h-1.5zM628.2 459.4h1.5v1.3h-1.5zM630.5 338.6h1.2v1.2h-1.2zM630.9 416h0.9v0.8h-0.9zM632.2 431.6h1.4v2h-1.4zM627.5 191.1h1.5v1.9h-1.5zM628.6 166.1h0.8v0.7h-0.8zM631.6 365.4h1.3v2.1h-1.3zM632.5 436.9h1.2v1.4h-1.2zM629.5 121.9h0.8v0.8h-0.8zM627.8 152h1.3v1.4h-1.3zM629.7 310h1.1v1.6h-1.1zM628.1 448.8h1.6v1.4h-1.6zM628.5 227h0.8v0.8h-0.8zM629.1 453.9h1.2v1.6h-1.2zM630.9 388.1h1.4v1.6h-1.4zM630 176h1.5v1.9h-1.5zM626.1 173.9h1.5v2.4h-1.5zM628.8 193.4h1v1h-1zM628.3 242h0.9v1h-0.9zM629 322.5h0.8v0.8h-0.8zM631.3 410.7h1.2v1.7h-1.2zM626.5 179.5h1.6v2.3h-1.6zM628.9 272.8h1.3v1.3h-1.3zM627.6 155.3h0.9v1.2h-0.9zM629.3 271.9h1v1h-1zM629.3 322.1h1.2v1.6h-1.2zM630.5 290.1h0.9v1h-0.9zM629.6 431.3h1.1v1.5h-1.1zM629.1 328.1h1.6v2h-1.6zM628.3 250.1h1.3v1.2h-1.3zM628.8 312.7h1.4v1.2h-1.4zM629.6 320.4h1v1h-1zM626.5 150.2h1.2v1h-1.2zM628.6 441.3h1.5v1.3h-1.5zM627.7 198.2h0.8v1.1h-0.8zM628.7 278.3h1v0.8h-1zM629.3 384.9h1.1v1.1h-1.1zM630.4 266.3h1.4v1.8h-1.4zM631 305.8h1.4v1.3h-1.4zM629.3 262.2h1.3v1.6h-1.3zM629.8 321.2h1v0.9h-1zM631.2 249.1h0.8v1.1h-0.8zM632.8 415.1h1.2v1.8h-1.2zM630.9 271.9h0.9v1.2h-0.9zM631.4 350.2h0.8v1.1h-0.8zM628.9 301.9h0.8v0.9h-0.8zM630.2 396.7h1v0.9h-1zM633 375.9h0.8v1.1h-0.8zM630 335.7h1.3v2h-1.3zM627.8 161.2h1.2v1.3h-1.2zM626.9 199.8h1.6v1.9h-1.6zM630.5 369.2h1.2v1.6h-1.2zM629.6 348.1h1v0.9h-1zM629.1 256.4h1.3v1.5h-1.3zM629 448.5h1.5v1.4h-1.5zM627.7 125.8h1.3v2h-1.3zM629.4 273.9h1.4v2.2h-1.4zM626.7 158.2h0.8v0.9h-0.8zM632.3 399.5h0.9v0.8h-0.9zM627.1 197.9h1v0.9h-1zM629.9 407.4h1.1v1.4h-1.1zM629.4 229.5h1.6v1.7h-1.6zM626.2 140.4h0.9v0.8h-0.9zM631.2 362.7h1v1.1h-1zM630.1 321.1h0.8v1h-0.8zM627.4 224.7h0.9v0.9h-0.9zM630.1 249.1h1.1v1.4h-1.1zM630.9 250.9h1v1.6h-1zM629.8 450.1h1v0.9h-1zM631 311.7h0.8v1.2h-0.8zM628.5 181.4h1v1.1h-1zM627 180.9h1.4v1.7h-1.4zM629.3 347.3h1.3v2h-1.3zM629.7 455.3h1v1.1h-1zM630.3 319.3h1.2v1.3h-1.2zM627.6 169.3h1.2v1.8h-1.2zM626.6 204.2h1.4v2h-1.4zM629.6 427.8h1.2v1.5h-1.2zM630.3 464.4h1.5v2.2h-1.5zM628.9 354.3h1.3v1.5h-1.3zM630.2 422.7h1.2v1.7h-1.2zM627.3 198.3h1.5v1.3h-1.5z" fill="#232323"/>
<path d="M625.2 511.4h1.8v1.8h-1.8zM623.1 519.3h1v1h-1zM619.7 520h1v1h-1zM624.8 509h1v1.4h-1zM623.2 516.6h1.2v1.6h-1.2zM622.1 517.7h1.9v2.3h-1.9zM615.2 532h0.9v1.3h-0.9zM620.4 518.5h1.2v1.5h-1.2zM625.6 508.6h1.3v1.4h-1.3zM621.4 518.4h1.9v2.8h-1.9zM611.6 533.1h1.8v2.4h-1.8z" fill="#ff6a00"/>
<path d="M623.1 519.5h1.7v2.6h-1.7zM624.4 512.1h1.2v1.5h-1.2zM610.1 535.1h1.3v1.9h-1.3zM625.6 510.8h1.4v1.8h-1.4zM622.6 517.7h1.3v1.7h-1.3zM623.9 509.5h1.8v2.5h-1.8zM613.7 529h1.8v2.2h-1.8zM614 529.7h1.7v1.9h-1.7zM618.6 522h1.8v1.9h-1.8zM628.2 507.2h1.4v1.8h-1.4zM618 524.1h1.6v2.1h-1.6zM629.5 508.9h1.4v2h-1.4zM612.9 531.8h1.3v2h-1.3zM617.7 524.3h1.4v1.6h-1.4z" fill="#ff9a00"/>
<path d="M624 508.9h1.6v2.4h-1.6zM621.6 517.8h1.7v1.5h-1.7zM621.6 518.4h0.9v0.8h-0.9zM622.8 513.6h1.8v2.1h-1.8zM611.9 532.5h1.3v1.7h-1.3zM624.2 512.1h0.9v1.4h-0.9zM608.9 535.5h1.2v1.1h-1.2zM624.8 508.8h1.7v1.4h-1.7zM622.1 515h1.6v2.3h-1.6zM622.2 518.9h1.5v1.7h-1.5z" fill="#ff00c8"/>
<path d="M618.6 521.7h1.1v1.7h-1.1zM626.9 508.2h1.2v1.7h-1.2zM615.8 526.3h1.6v2.5h-1.6zM628 518.1h1.7v2.1h-1.7zM623.7 516.6h1v1.1h-1zM619.1 520.6h0.9v1.2h-0.9zM611.9 532.8h1v1.4h-1zM616.4 530.6h1.7v1.4h-1.7zM623 519.3h1.5v1.8h-1.5zM624.2 510.7h1v1.3h-1zM625.1 510.6h0.9v1h-0.9zM620.6 520.3h1.6v1.5h-1.6zM614.6 528h1.8v1.7h-1.8z" fill="#ffb400"/>
<path d="M615.6 529.4h1.6v2h-1.6zM621.8 519.3h1.7v2.5h-1.7zM611.1 534.4h0.9v1.3h-0.9zM629.4 509.9h1v1.1h-1zM616.8 526.7h1.2v1.2h-1.2zM622.2 517.7h1.7v2.6h-1.7z" fill="#ffe000"/>
<path d="M610.8 533.6h1.2v1.3h-1.2zM609.1 534.2h1.3v1.5h-1.3zM629.1 507.1h1.6v2.6h-1.6zM622 520.7h1.2v1.7h-1.2zM619.3 524.1h1.2v1.2h-1.2zM627.8 508.8h1.7v2.4h-1.7zM624 513h1.3v2h-1.3zM624.9 513.5h1.2v1.1h-1.2zM614.1 530.9h1.5v2h-1.5z" fill="#d8f000"/>
<path d="M627.2 510.4h1.9v2.2h-1.9zM615.1 526.7h1.8v2.6h-1.8zM624.8 512.4h1.3v1.8h-1.3zM619 527.3h1.5v2.4h-1.5zM613.7 529.2h1.9v2.1h-1.9zM620 520.1h1.8v2.6h-1.8zM621.3 517.7h1.2v1.6h-1.2z" fill="#ffc800"/>
<path d="M390.9 525.9h1v1.1h-1zM435.2 452.9h1v1.6h-1zM549 407.8h1v0.8h-1zM437 520.1h0.9v0.9h-0.9zM546.2 377.9h0.9v1h-0.9zM401.2 128.3h0.9v1.3h-0.9zM540.4 501.3h0.9v0.9h-0.9zM504.2 362.1h1.1v1.1h-1.1zM501 221.9h0.9v1.1h-0.9zM397.6 173.1h0.8v0.8h-0.8zM435.6 115.4h0.9v1h-0.9zM510.2 321.9h0.7v0.7h-0.7zM406.7 173.2h0.8v0.8h-0.8zM461.3 143.7h0.9v0.7h-0.9zM393 299.2h1v1.1h-1zM447.7 523h0.9v1.3h-0.9zM553.1 284h0.8v1.1h-0.8zM477.3 374.3h0.9v1h-0.9zM449.3 243.2h0.8v1h-0.8zM530.6 252.7h0.8v1h-0.8zM568.9 470.9h1v1.2h-1zM436.8 337.7h0.8v1h-0.8zM468.7 294.9h1v0.8h-1zM520.2 469.4h1v1.3h-1zM502 371.4h0.9v1h-0.9zM566.2 96.5h0.8v1.1h-0.8zM453.7 392.8h1v1.3h-1zM557.2 279.5h1v1h-1zM428.2 301.3h1.1v1.2h-1.1zM454.7 90.1h1.1v1.3h-1.1zM556.9 157.8h0.7v1.2h-0.7zM563.6 216.5h0.9v1.3h-0.9zM561.2 207.5h1v1h-1zM609.8 507.3h0.7v0.7h-0.7zM572.4 430.8h0.8v0.7h-0.8zM457.6 456.1h0.7v0.6h-0.7zM534.9 244.4h0.8v1h-0.8zM602.3 119h0.9v1.1h-0.9zM555.2 428.4h0.8v1h-0.8zM462.5 294h0.8v1h-0.8zM602.5 124.4h1.1v1h-1.1zM415.7 315.6h1v1.1h-1zM541.3 304.2h0.8v0.9h-0.8zM429.1 522.1h1v0.9h-1zM499.1 237.2h0.9v1.4h-0.9z" fill="#109a50"/>
<path d="M624 453L633 449.4L633.3 520L631.6 522.4L629.8 511L626.4 484H624Z" fill="#22f2ff"/>
<path d="M624.6 484L626.6 484L630 511.4L631 519L628.2 511Z" fill="#232323"/>
<path d="M626.2 452.6L633 447.6L633 452L628 455.6Z" fill="#c020f0"/>
<path d="M631.4 515L633.2 513.4V521L631.8 522.6Z" fill="#2060ff"/>
<path d="M378.2 476Q375.6 490 377.4 503L379 504Q377.6 490 379.4 477Z" fill="#232323"/>
</g>
<path d="M659 89H663.3M659 208.8H663.3M659 328.4H663.3M659 448.1H663.3" stroke="#ececec" stroke-width="1.9"/>
<text class="lbl" x="664.4" y="93.8">18.746</text>
<text class="lbl" x="663.8" y="213.6">47.298</text>
<text class="lbl" x="664" y="333.2">75.851</text>
<text class="lbl" x="660.6" y="452.9">104.403</text>
</svg>
<div id="bot">
  <div id="tb">
    <svg class="abs" style="left:1px;top:1px" width="320" height="39" viewBox="5 545 320 39" fill="none" stroke="#1b90c4" stroke-width="1.3" stroke-linecap="round" stroke-linejoin="round">
      <!-- var icon -->
      <rect x="9.7" y="550.8" width="20.8" height="20.8" rx="2"/>
      <text x="20.1" y="562" text-anchor="middle" font-family="Liberation Sans,sans-serif" font-size="10.8" fill="#1b90c4" stroke="#1b90c4" stroke-width=".35" letter-spacing="-0.3">var</text>
      <path d="M14.4 565.2H26"/>
      <!-- EA icon -->
      <path d="M55.6 569.3V554.5Q55.6 552.7 57.4 552.7H72.6Q74.4 552.7 74.4 554.5V557.6H55.6M55.6 563.2H62M55.6 569.3H60.2" stroke-width="1.5"/>
      <path d="M72.4 562.4H75.4M72.4 565H75.4M72.4 567.6H75.4" stroke-width="1.2"/>
      <text x="62.4" y="570" font-family="Liberation Sans,sans-serif" font-size="13" font-weight="bold" font-style="italic" fill="#1b90c4" stroke="none">A</text>
      <!-- gear list icon -->
      <path stroke-width="1.2" d="M230.4 571.0L230.0 568.6L227.6 567.6L225.6 569.0L223.8 567.2L225.2 565.2L224.2 562.8L221.8 562.4L221.8 559.8L224.2 559.4L225.2 557.0L223.8 555.0L225.6 553.2L227.6 554.6L230.0 553.6L230.4 551.2L233.0 551.2L233.4 553.6L235.8 554.6L237.8 553.2L239.6 555.0L238.2 557.0L239.2 559.4L241.6 559.8L241.6 562.2M230.4 571H233.6"/>
      <circle cx="231.7" cy="561.1" r="4.6" stroke-width="1.2"/>
      <path d="M237.2 564.4H243.2M237.2 567.5H243.2M237.2 570.6H243.2" stroke-width="1.3"/>
      <!-- calendar clock icon -->
      <path d="M275.5 569.6H267.5V552.8H283.6V560" stroke-width="1.3"/>
      <path d="M271.4 551V554.6M279.4 551V554.6" stroke-width="1.3"/>
      <path d="M270.2 558.1H280.8M270.2 561.7H275.2M270.2 565.4H274.6" stroke-width="1.4"/>
      <circle cx="281.7" cy="565.6" r="5.2" stroke-width="1.3"/>
      <path d="M281.7 562.6V566.6H284.4" stroke-width="1.3"/>
    </svg>
    <span class="abs" style="left:76px;top:7.5px;font-size:16.35px;line-height:24px;color:#fff;white-space:nowrap">operator variable</span>
    <div class="abs" style="left:1091.3px;top:18.8px;width:19.8px;height:3px;background:#1e9ad0"></div>
  </div>
  <div id="sec"><span>3D Flatness</span></div>
  <div id="tbl">
    <div class="row" style="top:0;height:44.8px">
      <span class="c1" style="letter-spacing:-.23px;top:12.4px">Name</span><span class="c2" style="letter-spacing:-.67px;top:12.4px">Type</span><span class="c3" style="top:12.4px">Value</span>
      <div class="grip" style="left:228.3px"></div><div class="grip" style="left:378.3px"></div><div class="grip" style="left:1120px"></div>
    </div>
    <div class="row" style="top:44.8px"><span class="c1" style="letter-spacing:-.84px">Result</span><div class="tag tbool" style="left:246px;width:50px;top:9px">bool</div><div class="tag ttrue" style="left:396px;width:46px;top:9px">true</div></div>
    <div class="row" style="top:90.3px"><span class="c1" style="letter-spacing:0">Warning</span><div class="tag tbool" style="left:246px;width:50px">bool</div><div class="tag tfalse" style="left:396px;width:50px">false</div></div>
    <div class="row" style="top:135.8px"><span class="c1" style="top:10.9px">Message</span><div class="tag tmsg" style="left:246px;width:80px;top:9.2px">message</div></div>
    <div class="row" style="top:181.3px"><span class="c1" style="top:10.3px">Time</span><div class="tag tfloat" style="left:246px;width:50px;top:9px">float</div><span class="c3" style="letter-spacing:-.25px;top:10.3px">53.12</span></div>
    <div class="row" style="top:226.8px"><span class="c1" style="letter-spacing:-.62px;top:10.3px">flatness_value</span><div class="tag tfloat" style="left:246px;width:50px;top:8.6px">float</div><span class="c3" style="top:10.3px">0.033</span></div>
  </div>
</div>
</body>
</html>
